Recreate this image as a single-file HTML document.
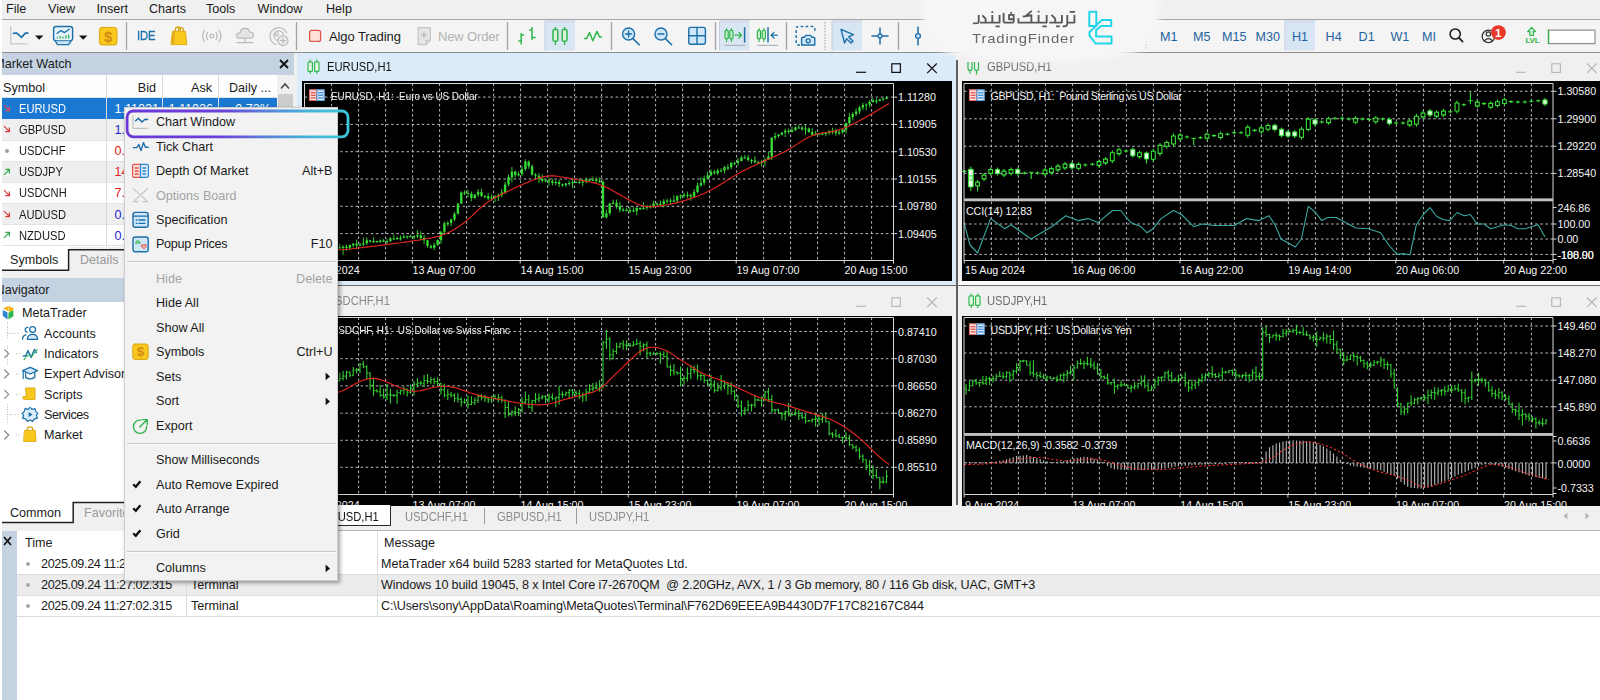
<!DOCTYPE html><html><head><meta charset="utf-8"><title>MetaTrader</title><style>
html,body{margin:0;padding:0;}
body{width:1600px;height:700px;overflow:hidden;background:#f0f0f0;font-family:"Liberation Sans",sans-serif;font-size:12.6px;color:#1a1a1a;position:relative;}
.a{position:absolute;}
.t{position:absolute;white-space:pre;line-height:16px;height:16px;}
.g{color:#a8a8a8;}
.hl{position:absolute;height:1px;}
.vl{position:absolute;width:1px;}
.blk{position:absolute;background:#000;overflow:hidden;}
.ct{position:absolute;white-space:pre;color:#f4f4f4;font-size:10.7px;line-height:12px;height:12px;}
svg{position:absolute;overflow:visible;}
</style></head><body><div class="a" style="left:0px;top:0px;width:1600px;height:19px;background:#f0f0f0;"></div><div class="t" style="left:6px;top:0.5px;">File</div><div class="t" style="left:48px;top:0.5px;">View</div><div class="t" style="left:96.5px;top:0.5px;">Insert</div><div class="t" style="left:149px;top:0.5px;">Charts</div><div class="t" style="left:206px;top:0.5px;">Tools</div><div class="t" style="left:257.5px;top:0.5px;">Window</div><div class="t" style="left:326px;top:0.5px;">Help</div>
<div class="a" style="left:0px;top:20px;width:1600px;height:32px;background:#f4f4f4;"></div><div class="hl" style="left:0px;top:19px;width:1600px;background:#a6a6a6;"></div><div class="hl" style="left:0px;top:52px;width:1600px;background:#8e8e8e;"></div>
<div class="a" style="left:297px;top:53px;width:659px;height:232px;background:#dcebfa;"></div><div class="a" style="left:957px;top:53px;width:643px;height:232px;background:#f0f0f0;"></div><div class="a" style="left:957px;top:281px;width:643px;height:4px;background:#fbfbfb;"></div><div class="a" style="left:297px;top:286px;width:659px;height:219px;background:#f0f0f0;"></div><div class="a" style="left:957px;top:286px;width:643px;height:219px;background:#f0f0f0;"></div><div class="vl" style="left:296px;top:53px;height:452px;background:#f0f0f0;"></div><div class="a" style="left:956px;top:60px;width:1.6px;height:445px;background:#5e5e5e;"></div><div class="hl" style="left:297px;top:285px;width:1303px;background:#6a6a6a;"></div><div class="t" style="left:327px;top:58.5px;color:#111;transform:scaleX(0.89);transform-origin:0 0;">EURUSD,H1</div><div class="t" style="left:986.5px;top:58.5px;color:#6c6c6c;transform:scaleX(0.89);transform-origin:0 0;">GBPUSD,H1</div><div class="t" style="left:327px;top:292.5px;color:#8a8a8a;transform:scaleX(0.89);transform-origin:0 0;">USDCHF,H1</div><div class="t" style="left:986.5px;top:292.5px;color:#6c6c6c;transform:scaleX(0.89);transform-origin:0 0;">USDJPY,H1</div><svg style="left:307px;top:58.5px;opacity:1" width="14" height="16"><path d="M3.2,0.5V15M9.8,0.5V15" stroke="#2fb64c" stroke-width="1.1"/><rect x="1" y="2.8" width="4.4" height="9.6" rx="1" fill="#e2f7e2" stroke="#2fb64c" stroke-width="1.15"/><rect x="7.6" y="2.8" width="4.4" height="9.6" rx="1" fill="#e2f7e2" stroke="#2fb64c" stroke-width="1.15"/></svg><svg style="left:967px;top:61px" width="14" height="14"><path d="M1,1V7.5Q1,9.5 3,9.5Q5,9.5 5,7.5V1M3,9.5V12.5M7.5,1V7.5Q7.5,9.5 9.5,9.5Q11.5,9.5 11.5,7.5V1M9.5,9.5V13.5" stroke="#2fb64c" stroke-width="1.2" fill="none"/></svg><svg style="left:968px;top:292.5px;opacity:1" width="14" height="16"><path d="M3.2,0.5V15M9.8,0.5V15" stroke="#2fb64c" stroke-width="1.1"/><rect x="1" y="2.8" width="4.4" height="9.6" rx="1" fill="#e2f7e2" stroke="#2fb64c" stroke-width="1.15"/><rect x="7.6" y="2.8" width="4.4" height="9.6" rx="1" fill="#e2f7e2" stroke="#2fb64c" stroke-width="1.15"/></svg><svg style="left:0;top:0" width="1600" height="700"><path d="M856,72.3h10" stroke="#151515" stroke-width="1.25"/><rect x="891.8" y="63.8" width="8.6" height="8.6" fill="none" stroke="#151515" stroke-width="1.25"/><path d="M927.2,63.5l9.6,9.6M936.8000000000001,63.5l-9.6,9.6" stroke="#151515" stroke-width="1.25" fill="none"/></svg><svg style="left:0;top:0" width="1600" height="700"><path d="M1516,72.3h10" stroke="#b4b4b4" stroke-width="1.1"/><rect x="1551.8" y="63.8" width="8.6" height="8.6" fill="none" stroke="#b4b4b4" stroke-width="1.1"/><path d="M1587,63.5l9.6,9.6M1596.6,63.5l-9.6,9.6" stroke="#b4b4b4" stroke-width="1.1" fill="none"/></svg><svg style="left:0;top:0" width="1600" height="700"><path d="M856,306.3h10" stroke="#b4b4b4" stroke-width="1.1"/><rect x="891.8" y="297.8" width="8.6" height="8.6" fill="none" stroke="#b4b4b4" stroke-width="1.1"/><path d="M927.2,297.5l9.6,9.6M936.8000000000001,297.5l-9.6,9.6" stroke="#b4b4b4" stroke-width="1.1" fill="none"/></svg><svg style="left:0;top:0" width="1600" height="700"><path d="M1516,306.3h10" stroke="#b4b4b4" stroke-width="1.1"/><rect x="1551.8" y="297.8" width="8.6" height="8.6" fill="none" stroke="#b4b4b4" stroke-width="1.1"/><path d="M1587,297.5l9.6,9.6M1596.6,297.5l-9.6,9.6" stroke="#b4b4b4" stroke-width="1.1" fill="none"/></svg>
<div class="blk" style="left:302px;top:81px;width:650px;height:199.5px;"></div>
<div class="blk" style="left:962px;top:81px;width:638px;height:199.5px;"></div>
<div class="blk" style="left:302px;top:315.5px;width:650px;height:190.5px;"><div class="ct" style="left:3.5px;top:183.5px;">9 Aug 2024</div><div class="ct" style="left:110.5px;top:183.5px;">13 Aug 07:00</div><div class="ct" style="left:218.5px;top:183.5px;">14 Aug 15:00</div><div class="ct" style="left:326.5px;top:183.5px;">15 Aug 23:00</div><div class="ct" style="left:434.5px;top:183.5px;">19 Aug 07:00</div><div class="ct" style="left:542.5px;top:183.5px;">20 Aug 15:00</div><div class="ct" style="left:29px;top:8.0px;transform:scaleX(0.93);transform-origin:0 0;">USDCHF, H1:  US Dollar vs Swiss Franc</div></div>
<div class="blk" style="left:962px;top:315.5px;width:638px;height:190.5px;"><div class="ct" style="left:3.0px;top:183.5px;">9 Aug 2024</div><div class="ct" style="left:110.40000000000009px;top:183.5px;">13 Aug 07:00</div><div class="ct" style="left:218.29999999999995px;top:183.5px;">14 Aug 15:00</div><div class="ct" style="left:326.20000000000005px;top:183.5px;">15 Aug 23:00</div><div class="ct" style="left:434.0999999999999px;top:183.5px;">19 Aug 07:00</div><div class="ct" style="left:542.0px;top:183.5px;">20 Aug 15:00</div></div>
<svg style="left:0;top:0" width="1600" height="700"><defs><clipPath id="ce"><rect x="304" y="83" width="590" height="178"/></clipPath></defs><path d="M331.6,83.5V260.5M358.6,83.5V260.5M385.6,83.5V260.5M412.6,83.5V260.5M439.6,83.5V260.5M466.6,83.5V260.5M493.6,83.5V260.5M520.6,83.5V260.5M547.6,83.5V260.5M574.6,83.5V260.5M601.6,83.5V260.5M628.6,83.5V260.5M655.6,83.5V260.5M682.6,83.5V260.5M709.6,83.5V260.5M736.6,83.5V260.5M763.6,83.5V260.5M790.6,83.5V260.5M817.6,83.5V260.5M844.6,83.5V260.5M871.6,83.5V260.5M304.5,97.1H893.5M304.5,124.4H893.5M304.5,151.7H893.5M304.5,179.0H893.5M304.5,206.3H893.5M304.5,233.6H893.5" stroke="#c2c6ca" stroke-width="1" stroke-dasharray="2.5 2.6" fill="none" opacity="0.95"/><g clip-path="url(#ce)"><path d="M306.0,247.1V251.1M309.4,247.5V250.5M312.8,245.6V252.0M316.1,245.8V249.6M319.5,245.9V249.0M322.9,244.8V249.6M326.2,246.9V249.2M329.6,245.7V248.4M333.0,244.0V248.1M336.4,244.8V249.7M339.8,243.9V248.3M343.1,245.2V255.2M346.5,244.7V250.8M349.9,244.5V249.8M353.2,243.2V247.5M356.6,239.6V249.2M360.0,242.8V245.9M363.4,237.4V246.0M366.8,237.3V244.9M370.1,239.7V242.7M373.5,237.3V242.6M376.9,240.6V242.6M380.2,239.7V242.9M383.6,238.9V242.1M387.0,238.8V243.8M390.4,237.0V242.2M393.8,234.4V239.7M397.1,236.5V239.7M400.5,235.6V240.6M403.9,234.6V238.2M407.2,235.7V238.5M410.6,234.8V237.1M414.0,235.4V239.4M417.4,230.0V238.2M420.8,231.2V240.2M424.1,235.1V244.2M427.5,239.8V247.7M430.9,244.4V248.7M434.2,242.7V250.1M437.6,239.3V245.8M441.0,231.2V243.7M444.4,221.6V234.6M447.8,221.2V226.4M451.1,218.7V226.0M454.5,212.1V221.0M457.9,203.1V214.4M461.2,191.4V204.2M464.6,190.3V195.2M468.0,189.8V197.3M471.4,191.6V201.1M474.8,194.1V198.9M478.1,189.1V196.9M481.5,188.9V196.9M484.9,195.2V198.3M488.2,193.2V200.0M491.6,194.2V200.8M495.0,195.1V201.9M498.4,193.2V201.1M501.8,189.0V197.4M505.1,181.6V194.1M508.5,174.4V186.2M511.9,166.9V182.4M515.2,170.7V177.6M518.6,171.7V176.7M522.0,165.7V176.0M525.4,159.3V170.8M528.8,160.4V168.9M532.1,164.5V175.6M535.5,173.1V179.0M538.9,173.2V183.0M542.2,174.4V182.6M545.6,179.2V182.3M549.0,178.4V185.8M552.4,178.8V185.3M555.8,180.1V185.3M559.1,179.8V187.1M562.5,183.6V186.7M565.9,182.9V186.9M569.2,180.8V185.6M572.6,178.6V188.1M576.0,181.0V182.6M579.4,178.4V183.8M582.8,179.5V186.3M586.1,177.7V183.3M589.5,178.5V181.3M592.9,176.5V181.1M596.2,177.5V183.4M599.6,177.5V183.1M603.0,180.3V217.9M606.4,209.7V218.3M609.8,202.8V215.4M613.1,199.6V204.2M616.5,199.5V208.8M619.9,201.8V212.4M623.2,207.7V211.7M626.6,207.7V211.5M630.0,207.0V213.3M633.4,207.2V212.3M636.8,207.0V215.3M640.1,207.3V210.1M643.5,202.2V209.4M646.9,205.4V210.2M650.2,204.7V208.5M653.6,200.7V208.0M657.0,202.5V205.2M660.4,200.4V206.5M663.8,199.1V207.5M667.1,198.6V203.7M670.5,198.4V204.3M673.9,195.2V201.9M677.2,195.4V203.3M680.6,194.5V199.5M684.0,192.9V197.8M687.4,191.5V198.2M690.8,193.7V200.8M694.1,189.1V197.4M697.5,182.7V193.0M700.9,177.3V186.7M704.2,175.5V185.4M707.6,171.7V179.4M711.0,169.4V176.1M714.4,170.0V174.4M717.8,168.7V175.2M721.1,168.1V172.3M724.5,165.8V173.4M727.9,164.4V170.3M731.2,162.0V169.1M734.6,161.7V165.2M738.0,158.0V165.5M741.4,155.7V161.5M744.8,154.9V158.4M748.1,154.9V161.6M751.5,158.8V163.7M754.9,156.3V163.3M758.2,160.9V163.8M761.6,159.8V166.7M765.0,157.5V166.4M768.4,151.9V160.1M771.8,137.1V160.1M775.1,132.6V140.3M778.5,134.0V137.5M781.9,132.0V135.4M785.2,128.5V137.0M788.6,128.5V133.9M792.0,126.8V132.4M795.4,126.3V131.0M798.8,124.7V128.8M802.1,126.2V130.7M805.5,124.8V134.8M808.9,127.5V132.7M812.2,128.2V136.0M815.6,130.9V135.7M819.0,132.9V134.3M822.4,132.4V135.3M825.8,132.1V136.3M829.1,130.0V135.1M832.5,127.8V134.2M835.9,128.8V135.7M839.2,129.9V134.9M842.6,128.8V134.1M846.0,122.6V133.6M849.4,113.0V125.9M852.8,112.3V120.5M856.1,108.5V116.0M859.5,105.9V113.9M862.9,102.9V110.2M866.2,103.4V110.3M869.6,100.0V107.3M873.0,98.3V102.8M876.4,98.3V103.7M879.8,98.6V101.3M883.1,97.8V101.3M886.5,96.1V99.2" stroke="#38e038" stroke-width="1" fill="none" opacity="0.9"/><path d="M304.8,249.5h2.4v1.2h-2.4zM308.2,249.0h2.4v1.2h-2.4zM311.6,248.4h2.4v1.2h-2.4zM314.9,246.5h2.4v1.9h-2.4zM318.3,246.5h2.4v1.5h-2.4zM321.7,248.0h2.4v1.2h-2.4zM325.1,247.5h2.4v1.2h-2.4zM328.4,247.3h2.4v1.2h-2.4zM331.8,246.6h2.4v1.2h-2.4zM335.2,246.6h2.4v1.2h-2.4zM338.6,247.2h2.4v1.2h-2.4zM341.9,246.8h2.4v1.2h-2.4zM345.3,246.8h2.4v1.2h-2.4zM348.7,245.1h2.4v2.7h-2.4zM352.1,243.8h2.4v1.4h-2.4zM355.4,243.8h2.4v1.7h-2.4zM358.8,244.6h2.4v1.2h-2.4zM362.2,243.3h2.4v1.3h-2.4zM365.6,240.2h2.4v3.0h-2.4zM368.9,240.2h2.4v1.2h-2.4zM372.3,241.0h2.4v1.2h-2.4zM375.7,241.0h2.4v1.2h-2.4zM379.1,240.5h2.4v1.2h-2.4zM382.4,240.5h2.4v1.2h-2.4zM385.8,241.1h2.4v1.2h-2.4zM389.2,238.6h2.4v2.5h-2.4zM392.6,238.4h2.4v1.2h-2.4zM395.9,238.0h2.4v1.2h-2.4zM399.3,237.7h2.4v1.2h-2.4zM402.7,236.4h2.4v1.4h-2.4zM406.1,236.3h2.4v1.2h-2.4zM409.4,236.0h2.4v1.2h-2.4zM412.8,236.0h2.4v1.2h-2.4zM416.2,235.2h2.4v1.2h-2.4zM419.6,235.2h2.4v2.8h-2.4zM422.9,238.0h2.4v2.2h-2.4zM426.3,240.2h2.4v5.8h-2.4zM429.7,246.0h2.4v1.8h-2.4zM433.1,245.1h2.4v2.7h-2.4zM436.4,240.1h2.4v5.0h-2.4zM439.8,231.8h2.4v8.4h-2.4zM443.2,223.2h2.4v8.6h-2.4zM446.6,223.0h2.4v1.2h-2.4zM449.9,219.5h2.4v3.6h-2.4zM453.3,213.7h2.4v5.8h-2.4zM456.7,203.6h2.4v10.1h-2.4zM460.1,192.5h2.4v11.1h-2.4zM463.4,192.5h2.4v1.2h-2.4zM466.8,192.9h2.4v1.2h-2.4zM470.2,193.7h2.4v4.4h-2.4zM473.6,194.8h2.4v3.3h-2.4zM476.9,192.1h2.4v2.7h-2.4zM480.3,192.1h2.4v4.0h-2.4zM483.7,195.9h2.4v1.2h-2.4zM487.1,195.9h2.4v2.6h-2.4zM490.4,197.3h2.4v1.2h-2.4zM493.8,196.7h2.4v1.2h-2.4zM497.2,195.3h2.4v1.5h-2.4zM500.6,192.5h2.4v2.8h-2.4zM503.9,184.5h2.4v8.0h-2.4zM507.3,177.1h2.4v7.3h-2.4zM510.7,171.4h2.4v5.8h-2.4zM514.0,171.4h2.4v3.8h-2.4zM517.4,174.0h2.4v1.2h-2.4zM520.8,169.0h2.4v4.9h-2.4zM524.2,161.5h2.4v7.5h-2.4zM527.5,161.5h2.4v4.8h-2.4zM530.9,166.3h2.4v8.2h-2.4zM534.3,174.5h2.4v1.3h-2.4zM537.7,175.7h2.4v3.0h-2.4zM541.0,178.8h2.4v2.0h-2.4zM544.4,180.3h2.4v1.2h-2.4zM547.8,180.3h2.4v1.2h-2.4zM551.2,181.2h2.4v1.9h-2.4zM554.5,182.0h2.4v1.2h-2.4zM557.9,182.0h2.4v2.1h-2.4zM561.3,184.2h2.4v1.2h-2.4zM564.7,183.5h2.4v1.5h-2.4zM568.0,182.9h2.4v1.2h-2.4zM571.4,182.0h2.4v1.2h-2.4zM574.8,181.9h2.4v1.2h-2.4zM578.2,181.9h2.4v1.2h-2.4zM581.5,181.2h2.4v1.3h-2.4zM584.9,179.6h2.4v1.7h-2.4zM588.3,179.6h2.4v1.2h-2.4zM591.7,179.6h2.4v1.2h-2.4zM595.0,179.9h2.4v1.2h-2.4zM598.4,180.8h2.4v1.2h-2.4zM601.8,181.9h2.4v35.4h-2.4zM605.2,213.2h2.4v4.2h-2.4zM608.5,203.4h2.4v9.8h-2.4zM611.9,202.7h2.4v1.2h-2.4zM615.3,202.7h2.4v3.4h-2.4zM618.7,206.2h2.4v3.5h-2.4zM622.0,209.6h2.4v1.2h-2.4zM625.4,209.7h2.4v1.2h-2.4zM628.8,210.0h2.4v1.2h-2.4zM632.2,210.4h2.4v1.2h-2.4zM635.5,208.0h2.4v3.2h-2.4zM638.9,208.0h2.4v1.2h-2.4zM642.3,208.1h2.4v1.2h-2.4zM645.7,206.3h2.4v1.8h-2.4zM649.0,206.3h2.4v1.2h-2.4zM652.4,203.4h2.4v3.2h-2.4zM655.8,203.4h2.4v1.3h-2.4zM659.2,204.1h2.4v1.2h-2.4zM662.5,201.3h2.4v2.8h-2.4zM665.9,200.4h2.4v1.2h-2.4zM669.3,200.4h2.4v1.2h-2.4zM672.7,200.5h2.4v1.2h-2.4zM676.0,196.3h2.4v4.2h-2.4zM679.4,195.3h2.4v1.2h-2.4zM682.8,194.7h2.4v1.2h-2.4zM686.2,194.7h2.4v1.2h-2.4zM689.5,195.1h2.4v1.5h-2.4zM692.9,192.1h2.4v4.6h-2.4zM696.3,185.4h2.4v6.6h-2.4zM699.7,182.9h2.4v2.6h-2.4zM703.0,178.8h2.4v4.0h-2.4zM706.4,175.2h2.4v3.6h-2.4zM709.8,171.8h2.4v3.4h-2.4zM713.2,171.8h2.4v1.5h-2.4zM716.5,170.6h2.4v2.7h-2.4zM719.9,170.4h2.4v1.2h-2.4zM723.3,167.2h2.4v3.2h-2.4zM726.7,167.2h2.4v1.2h-2.4zM730.0,162.9h2.4v4.4h-2.4zM733.4,162.9h2.4v1.2h-2.4zM736.8,161.0h2.4v2.1h-2.4zM740.2,157.6h2.4v3.4h-2.4zM743.5,157.4h2.4v1.2h-2.4zM746.9,157.4h2.4v2.6h-2.4zM750.3,160.0h2.4v1.2h-2.4zM753.7,160.6h2.4v1.6h-2.4zM757.0,162.2h2.4v1.2h-2.4zM760.4,161.8h2.4v1.2h-2.4zM763.8,159.7h2.4v2.1h-2.4zM767.2,156.5h2.4v3.2h-2.4zM770.5,137.8h2.4v18.7h-2.4zM773.9,136.1h2.4v1.6h-2.4zM777.3,134.6h2.4v1.5h-2.4zM780.7,132.6h2.4v2.1h-2.4zM784.0,130.7h2.4v1.9h-2.4zM787.4,130.7h2.4v1.2h-2.4zM790.8,130.2h2.4v1.7h-2.4zM794.2,127.6h2.4v2.6h-2.4zM797.5,127.4h2.4v1.2h-2.4zM800.9,127.4h2.4v1.9h-2.4zM804.3,128.5h2.4v1.2h-2.4zM807.7,128.5h2.4v3.5h-2.4zM811.0,131.9h2.4v2.9h-2.4zM814.4,133.7h2.4v1.2h-2.4zM817.8,133.5h2.4v1.2h-2.4zM821.2,133.5h2.4v1.2h-2.4zM824.5,132.7h2.4v1.2h-2.4zM827.9,131.6h2.4v1.2h-2.4zM831.3,131.0h2.4v1.2h-2.4zM834.7,131.0h2.4v2.1h-2.4zM838.0,132.2h2.4v1.2h-2.4zM841.4,129.7h2.4v2.5h-2.4zM844.8,123.1h2.4v6.6h-2.4zM848.2,116.9h2.4v6.2h-2.4zM851.5,113.9h2.4v3.1h-2.4zM854.9,111.6h2.4v2.3h-2.4zM858.3,107.6h2.4v4.0h-2.4zM861.7,105.1h2.4v2.5h-2.4zM865.0,104.4h2.4v1.2h-2.4zM868.4,102.0h2.4v2.4h-2.4zM871.8,100.6h2.4v1.3h-2.4zM875.2,100.6h2.4v1.2h-2.4zM878.5,99.4h2.4v1.5h-2.4zM881.9,98.4h2.4v1.2h-2.4zM885.3,97.7h2.4v1.2h-2.4z" fill="#38e038" opacity="0.95"/><path d="M304.0,251.0 L306.0,250.9 L308.0,250.9 L310.0,250.8 L312.0,250.8 L314.0,250.7 L316.0,250.7 L318.0,250.6 L320.0,250.6 L322.0,250.5 L324.0,250.5 L326.0,250.4 L328.0,250.4 L330.0,250.3 L332.0,250.2 L334.0,250.2 L336.0,250.1 L338.0,250.0 L340.0,249.8 L342.0,249.7 L344.0,249.5 L346.0,249.4 L348.0,249.2 L350.0,249.0 L352.0,248.7 L354.0,248.5 L356.0,248.3 L358.0,248.0 L360.0,247.8 L362.0,247.6 L364.0,247.3 L366.0,247.1 L368.0,246.9 L370.0,246.7 L372.0,246.4 L374.0,246.2 L376.0,245.9 L378.0,245.7 L380.0,245.4 L382.0,245.2 L384.0,244.9 L386.0,244.7 L388.0,244.4 L390.0,244.1 L392.0,243.8 L394.0,243.6 L396.0,243.3 L398.0,243.0 L400.0,242.8 L402.0,242.5 L404.0,242.2 L406.0,241.9 L408.0,241.7 L410.0,241.4 L412.0,241.1 L414.0,240.8 L416.0,240.5 L418.0,240.2 L420.0,239.9 L422.0,239.5 L424.0,239.2 L426.0,238.8 L428.0,238.5 L430.0,238.1 L432.0,237.8 L434.0,237.4 L436.0,236.9 L438.0,236.4 L440.0,235.8 L442.0,235.1 L444.0,234.4 L446.0,233.6 L448.0,232.7 L450.0,231.7 L452.0,230.7 L454.0,229.5 L456.0,228.3 L458.0,227.0 L460.0,225.6 L462.0,224.2 L464.0,222.7 L466.0,221.1 L468.0,219.4 L470.0,217.7 L472.0,215.9 L474.0,214.0 L476.0,212.0 L478.0,210.1 L480.0,208.3 L482.0,206.6 L484.0,205.0 L486.0,203.4 L488.0,202.0 L490.0,200.6 L492.0,199.4 L494.0,198.2 L496.0,197.1 L498.0,196.1 L500.0,195.1 L502.0,194.1 L504.0,193.1 L506.0,192.2 L508.0,191.2 L510.0,190.2 L512.0,189.3 L514.0,188.3 L516.0,187.4 L518.0,186.5 L520.0,185.6 L522.0,184.7 L524.0,183.8 L526.0,183.0 L528.0,182.2 L530.0,181.3 L532.0,180.6 L534.0,179.8 L536.0,179.0 L538.0,178.3 L540.0,177.6 L542.0,177.1 L544.0,176.6 L546.0,176.3 L548.0,176.1 L550.0,175.9 L552.0,175.9 L554.0,175.9 L556.0,176.1 L558.0,176.3 L560.0,176.7 L562.0,177.0 L564.0,177.4 L566.0,177.7 L568.0,178.0 L570.0,178.4 L572.0,178.7 L574.0,179.1 L576.0,179.5 L578.0,179.8 L580.0,180.2 L582.0,180.5 L584.0,180.9 L586.0,181.3 L588.0,181.6 L590.0,182.0 L592.0,182.4 L594.0,182.9 L596.0,183.4 L598.0,184.0 L600.0,184.7 L602.0,185.4 L604.0,186.3 L606.0,187.2 L608.0,188.1 L610.0,189.2 L612.0,190.3 L614.0,191.4 L616.0,192.5 L618.0,193.7 L620.0,194.8 L622.0,195.9 L624.0,197.1 L626.0,198.2 L628.0,199.3 L630.0,200.5 L632.0,201.6 L634.0,202.6 L636.0,203.6 L638.0,204.4 L640.0,205.0 L642.0,205.6 L644.0,206.1 L646.0,206.4 L648.0,206.6 L650.0,206.7 L652.0,206.6 L654.0,206.5 L656.0,206.3 L658.0,206.1 L660.0,205.9 L662.0,205.6 L664.0,205.3 L666.0,205.0 L668.0,204.7 L670.0,204.3 L672.0,203.9 L674.0,203.4 L676.0,202.9 L678.0,202.4 L680.0,201.9 L682.0,201.3 L684.0,200.7 L686.0,200.1 L688.0,199.4 L690.0,198.8 L692.0,198.1 L694.0,197.4 L696.0,196.7 L698.0,196.0 L700.0,195.2 L702.0,194.3 L704.0,193.5 L706.0,192.5 L708.0,191.6 L710.0,190.5 L712.0,189.5 L714.0,188.4 L716.0,187.2 L718.0,186.0 L720.0,184.7 L722.0,183.5 L724.0,182.2 L726.0,180.9 L728.0,179.7 L730.0,178.5 L732.0,177.3 L734.0,176.1 L736.0,174.9 L738.0,173.8 L740.0,172.7 L742.0,171.6 L744.0,170.5 L746.0,169.5 L748.0,168.5 L750.0,167.6 L752.0,166.6 L754.0,165.7 L756.0,164.7 L758.0,163.8 L760.0,162.9 L762.0,162.0 L764.0,161.1 L766.0,160.2 L768.0,159.3 L770.0,158.5 L772.0,157.6 L774.0,156.7 L776.0,155.8 L778.0,154.9 L780.0,154.0 L782.0,153.0 L784.0,152.0 L786.0,150.9 L788.0,149.8 L790.0,148.6 L792.0,147.4 L794.0,146.2 L796.0,144.9 L798.0,143.6 L800.0,142.2 L802.0,140.9 L804.0,139.7 L806.0,138.6 L808.0,137.5 L810.0,136.6 L812.0,135.8 L814.0,135.0 L816.0,134.4 L818.0,133.8 L820.0,133.4 L822.0,133.0 L824.0,132.7 L826.0,132.5 L828.0,132.2 L830.0,131.9 L832.0,131.6 L834.0,131.1 L836.0,130.7 L838.0,130.1 L840.0,129.5 L842.0,128.8 L844.0,128.1 L846.0,127.3 L848.0,126.4 L850.0,125.5 L852.0,124.5 L854.0,123.5 L856.0,122.5 L858.0,121.5 L860.0,120.4 L862.0,119.3 L864.0,118.2 L866.0,117.1 L868.0,116.0 L870.0,114.8 L872.0,113.7 L874.0,112.5 L876.0,111.3 L878.0,110.0 L880.0,108.9 L882.0,107.7 L884.0,106.5 L886.0,105.3 L888.0,104.2 L889.0,103.5" stroke="#e8281e" stroke-width="1.1" fill="none" opacity="1" stroke-linejoin="round"/></g><path d="M304.5,260.5V83.5H893.5V263.5M304.5,260.5H893.5" stroke="#d8d8d8" stroke-width="1" fill="none"/><path d="M893.5,97.1h3.5M893.5,124.4h3.5M893.5,151.7h3.5M893.5,179h3.5M893.5,206.3h3.5M893.5,233.6h3.5M304.2,260.5v3M412.2,260.5v3M520.2,260.5v3M628.2,260.5v3M736.2,260.5v3M844.2,260.5v3" stroke="#d8d8d8" stroke-width="1" fill="none"/><g transform="translate(309,89.5)"><rect x="0" y="0" width="15.5" height="11.5" fill="#fff"/><rect x="0.4" y="0.4" width="7.2" height="10.7" fill="#fbe3e0" stroke="#e0524a" stroke-width="0.9"/><rect x="7.9" y="0.4" width="7.2" height="10.7" fill="#dcecfa" stroke="#3d8fd6" stroke-width="0.9"/><path d="M1.6,3.2H6.6" stroke="#e0524a" stroke-width="1.3"/><path d="M9,3.2H14" stroke="#3d8fd6" stroke-width="1.3"/><path d="M1.6,5.8H6.6" stroke="#e0524a" stroke-width="1.3"/><path d="M9,5.8H14" stroke="#3d8fd6" stroke-width="1.3"/><path d="M1.6,8.4H6.6" stroke="#e0524a" stroke-width="1.3"/><path d="M9,8.4H14" stroke="#3d8fd6" stroke-width="1.3"/></g></svg><div class="ct" style="left:898px;top:91.1px;">1.11280</div><div class="ct" style="left:898px;top:118.4px;">1.10905</div><div class="ct" style="left:898px;top:145.7px;">1.10530</div><div class="ct" style="left:898px;top:173px;">1.10155</div><div class="ct" style="left:898px;top:200.3px;">1.09780</div><div class="ct" style="left:898px;top:227.6px;">1.09405</div><div class="ct" style="left:305.5px;top:264px;">9 Aug 2024</div><div class="ct" style="left:412.5px;top:264px;">13 Aug 07:00</div><div class="ct" style="left:520.5px;top:264px;">14 Aug 15:00</div><div class="ct" style="left:628.5px;top:264px;">15 Aug 23:00</div><div class="ct" style="left:736.5px;top:264px;">19 Aug 07:00</div><div class="ct" style="left:844.5px;top:264px;">20 Aug 15:00</div><div class="ct" style="left:331px;top:89.5px;transform:scaleX(0.925);transform-origin:0 0;">EURUSD, H1:  Euro vs US Dollar</div>
<svg style="left:0;top:0" width="1600" height="700"><path d="M991.4,83.5V198.8M1018.4,83.5V198.8M1045.4,83.5V198.8M1072.4,83.5V198.8M1099.4,83.5V198.8M1126.4,83.5V198.8M1153.4,83.5V198.8M1180.4,83.5V198.8M1207.4,83.5V198.8M1234.4,83.5V198.8M1261.4,83.5V198.8M1288.4,83.5V198.8M1315.4,83.5V198.8M1342.4,83.5V198.8M1369.4,83.5V198.8M1396.4,83.5V198.8M1423.4,83.5V198.8M1450.4,83.5V198.8M1477.4,83.5V198.8M1504.4,83.5V198.8M1531.4,83.5V198.8M964,91.3H1553M964,118.8H1553M964,146.2H1553M964,173.4H1553" stroke="#c2c6ca" stroke-width="1" stroke-dasharray="2.5 2.6" fill="none" opacity="0.95"/><path d="M991.4,201.6V260.5M1018.4,201.6V260.5M1045.4,201.6V260.5M1072.4,201.6V260.5M1099.4,201.6V260.5M1126.4,201.6V260.5M1153.4,201.6V260.5M1180.4,201.6V260.5M1207.4,201.6V260.5M1234.4,201.6V260.5M1261.4,201.6V260.5M1288.4,201.6V260.5M1315.4,201.6V260.5M1342.4,201.6V260.5M1369.4,201.6V260.5M1396.4,201.6V260.5M1423.4,201.6V260.5M1450.4,201.6V260.5M1477.4,201.6V260.5M1504.4,201.6V260.5M1531.4,201.6V260.5M964,224.0H1553M964,239.0H1553M964,254.4H1553" stroke="#c2c6ca" stroke-width="1" stroke-dasharray="2.5 2.6" fill="none" opacity="0.95"/><path d="M962.2,171.4h4.4M964.4,170.0v2.8M970.8,174.0v8M977.6,180.0v8M984.0,173.0v8M990.7,167.5v8M997.5,167.5v8M1004.0,169.0v8M1011.0,167.5v8M1017.7,167.5v8M1022.2,173.0h4.4M1024.4,171.6v2.8M1028.8,172.3h4.8M1031.2,172.3v6.8M1035.4,173.0h4.4M1037.6,171.6v2.8M1045.0,168.0v8M1051.4,166.5v8M1058.0,164.0v8M1065.0,162.0v8M1072.0,161.8v8M1078.6,162.3v8M1083.1,165.0h4.4M1085.3,163.6v2.8M1090.2,164.3h4.4M1092.4,162.9v2.8M1099.0,159.5v8M1105.5,157.0v8M1112.3,150.2v13M1119.0,147.7v8M1123.8,151.0h4.4M1126.0,149.6v2.8M1132.8,147.6v10M1139.5,150.7v8M1146.5,151.5v12M1153.3,148.8v13M1160.0,142.9v13M1166.7,140.4v8M1173.5,133.5v13M1180.2,133.0v8M1184.8,137.0h4.4M1187.0,135.6v2.8M1191.3,138.2h4.8M1193.7,138.2v6.8M1198.2,137.7h4.4M1200.4,136.3v2.8M1207.0,132.2v8M1211.8,135.6h4.4M1214.0,134.2v2.8M1220.6,131.6v8M1225.2,134.2h4.4M1227.4,132.8v2.8M1231.8,132.7h4.4M1234.0,131.3v2.8M1238.8,132.7h4.4M1241.0,131.3v2.8M1247.8,124.7v13M1252.4,130.4h4.4M1254.6,129.0v2.8M1261.3,125.8v8M1268.0,123.4v8M1274.8,123.4v8M1281.5,127.5v10M1288.0,130.0v8M1294.7,130.0v8M1301.5,126.8v13M1308.3,117.3v14M1315.0,118.0v8M1319.5,122.0h4.4M1321.7,120.6v2.8M1328.5,116.7v8M1332.8,118.3h4.4M1335.0,116.9v2.8M1339.8,118.3h4.4M1342.0,116.9v2.8M1346.8,119.0h4.4M1349.0,117.6v2.8M1355.5,116.3v8M1360.1,119.0h4.4M1362.3,117.6v2.8M1366.8,119.5h4.4M1369.0,118.1v2.8M1375.8,115.9v8M1380.4,119.0h4.4M1382.6,117.6v2.8M1389.4,117.5v8M1393.8,123.0h4.4M1396.0,121.6v2.8M1400.8,123.0h4.4M1403.0,121.6v2.8M1409.7,119.0v8M1416.4,113.8v13M1423.0,111.0v8M1430.0,109.0v8M1436.6,110.2v8M1443.5,109.0v8M1448.1,111.8h4.4M1450.3,110.4v2.8M1457.0,100.5v13M1461.6,104.8h4.4M1463.8,103.4v2.8M1468.0,100.8h4.8M1470.4,92.3v12M1477.3,100.0v8M1481.8,103.6h4.4M1484.0,102.2v2.8M1490.7,101.3v8M1497.5,99.6v8M1504.4,97.6v8M1508.8,101.6h4.4M1511.0,100.2v2.8M1515.6,102.0h4.4M1517.8,100.6v2.8M1522.6,102.0h4.4M1524.8,100.6v2.8M1529.1,101.2h4.4M1531.3,99.8v2.8M1536.0,100.8h4.4M1538.2,99.4v2.8M1545.0,98.0v8M970.8,166.5v24.5M977.6,181v10.5" stroke="#38e038" stroke-width="1.1" fill="none"/><path d="M975.7,182.1h3.8v3.8h-3.8zM982.1,175.1h3.8v3.8h-3.8zM988.8,169.6h3.8v3.8h-3.8zM1002.1,171.1h3.8v3.8h-3.8zM1009.1,169.6h3.8v3.8h-3.8zM1043.1,170.1h3.8v3.8h-3.8zM1049.5,168.6h3.8v3.8h-3.8zM1056.1,166.1h3.8v3.8h-3.8zM1063.1,164.1h3.8v3.8h-3.8zM1076.7,164.4h3.8v3.8h-3.8zM1097.1,161.6h3.8v3.8h-3.8zM1103.6,159.1h3.8v3.8h-3.8zM1110.4,152.7h3.8v8h-3.8zM1117.1,149.8h3.8v3.8h-3.8zM1137.6,152.8h3.8v3.8h-3.8zM1151.4,151.3h3.8v8h-3.8zM1158.1,145.4h3.8v8h-3.8zM1164.8,142.5h3.8v3.8h-3.8zM1171.6,136.0h3.8v8h-3.8zM1178.3,135.1h3.8v3.8h-3.8zM1205.1,134.3h3.8v3.8h-3.8zM1218.7,133.7h3.8v3.8h-3.8zM1245.9,127.2h3.8v8h-3.8zM1259.4,127.9h3.8v3.8h-3.8zM1266.1,125.5h3.8v3.8h-3.8zM1299.6,129.3h3.8v8h-3.8zM1306.4,119.1h3.8v10.4h-3.8zM1326.6,118.8h3.8v3.8h-3.8zM1353.6,118.4h3.8v3.8h-3.8zM1373.9,118.0h3.8v3.8h-3.8zM1407.8,121.1h3.8v3.8h-3.8zM1414.5,116.3h3.8v8h-3.8zM1421.1,113.1h3.8v3.8h-3.8zM1434.7,112.3h3.8v3.8h-3.8zM1441.6,111.1h3.8v3.8h-3.8zM1455.1,103.0h3.8v8h-3.8zM1475.4,102.1h3.8v3.8h-3.8zM1488.8,103.4h3.8v3.8h-3.8zM1495.6,101.7h3.8v3.8h-3.8zM1502.5,99.7h3.8v3.8h-3.8z" stroke="#38e038" stroke-width="1.1" fill="#000"/><path d="M968.7,175.9h4.2v4.2h-4.2zM995.4,169.4h4.2v4.2h-4.2zM1015.6,169.4h4.2v4.2h-4.2zM1069.9,163.7h4.2v4.2h-4.2zM1130.7,149.4h4.2v6.4h-4.2zM1144.4,153.0h4.2v6h-4.2zM1272.7,125.3h4.2v4.2h-4.2zM1279.4,129.3h4.2v6.4h-4.2zM1285.9,131.9h4.2v4.2h-4.2zM1292.6,131.9h4.2v4.2h-4.2zM1312.9,119.9h4.2v4.2h-4.2zM1387.3,119.4h4.2v4.2h-4.2zM1427.9,110.9h4.2v4.2h-4.2zM1542.9,99.9h4.2v4.2h-4.2zM968.4,169.3h4.8v17.6h-4.8z" stroke="#38e038" stroke-width="1" fill="#eaffea"/><path d="M964.0,222.6 L970.0,245.0 L977.6,253.0 L990.6,218.6 L1004.8,228.7 L1011.0,224.7 L1031.0,239.0 L1051.6,226.7 L1065.8,215.7 L1078.0,220.6 L1088.0,218.6 L1098.0,222.6 L1112.5,210.5 L1120.6,210.5 L1130.8,222.6 L1141.0,226.7 L1147.0,232.8 L1153.0,228.7 L1161.0,218.6 L1173.4,210.5 L1181.5,214.5 L1193.7,226.7 L1202.0,224.0 L1214.0,225.5 L1234.4,225.5 L1246.6,218.6 L1258.7,220.6 L1269.0,215.7 L1275.0,224.7 L1281.0,239.0 L1295.3,247.0 L1301.4,239.0 L1308.3,206.4 L1315.6,212.5 L1321.7,220.6 L1328.0,217.5 L1336.0,217.5 L1356.0,228.0 L1368.4,228.7 L1380.6,232.8 L1388.8,245.0 L1397.0,254.4 L1403.0,253.6 L1410.0,254.8 L1416.4,224.7 L1423.3,214.5 L1430.0,207.6 L1436.7,216.5 L1443.0,219.5 L1449.7,220.6 L1457.0,212.5 L1464.0,215.7 L1470.4,214.5 L1477.0,223.9 L1484.0,224.0 L1490.7,228.7 L1504.5,224.7 L1511.0,225.5 L1518.0,228.7 L1525.0,228.7 L1538.0,224.7 L1545.0,236.9" stroke="#3aa8a0" stroke-width="1.1" fill="none" opacity="1" stroke-linejoin="round"/><path d="M964,198.8V83.5H1553V263.5M964,260.5V201.6M964,260.5H1553" stroke="#d8d8d8" stroke-width="1" fill="none"/><rect x="963.5" y="198.4" width="589.5" height="2.9" fill="#c0c0c0"/><path d="M1553,91.3h3.5M1553,118.8h3.5M1553,146.2h3.5M1553,173.4h3.5M1553,207.5h3.5M1553,224h3.5M1553,239h3.5M1553,254.4h3.5M1553,259.5h3.5M964.2,260.5v3M1072.1,260.5v3M1180.0,260.5v3M1287.9,260.5v3M1395.8,260.5v3M1503.7,260.5v3" stroke="#d8d8d8" stroke-width="1" fill="none"/><g transform="translate(969,89.5)"><rect x="0" y="0" width="15.5" height="11.5" fill="#fff"/><rect x="0.4" y="0.4" width="7.2" height="10.7" fill="#fbe3e0" stroke="#e0524a" stroke-width="0.9"/><rect x="7.9" y="0.4" width="7.2" height="10.7" fill="#dcecfa" stroke="#3d8fd6" stroke-width="0.9"/><path d="M1.6,3.2H6.6" stroke="#e0524a" stroke-width="1.3"/><path d="M9,3.2H14" stroke="#3d8fd6" stroke-width="1.3"/><path d="M1.6,5.8H6.6" stroke="#e0524a" stroke-width="1.3"/><path d="M9,5.8H14" stroke="#3d8fd6" stroke-width="1.3"/><path d="M1.6,8.4H6.6" stroke="#e0524a" stroke-width="1.3"/><path d="M9,8.4H14" stroke="#3d8fd6" stroke-width="1.3"/></g></svg><div class="ct" style="left:1557.5px;top:85.3px;">1.30580</div><div class="ct" style="left:1557.5px;top:112.8px;">1.29900</div><div class="ct" style="left:1557.5px;top:140.2px;">1.29220</div><div class="ct" style="left:1557.5px;top:167.4px;">1.28540</div><div class="ct" style="left:1557.5px;top:201.5px;">246.86</div><div class="ct" style="left:1557.5px;top:218px;">100.00</div><div class="ct" style="left:1557.5px;top:233px;">0.00</div><div class="ct" style="left:1557.5px;top:249px;">-100.00</div><div class="ct" style="left:1557.5px;top:249px;">-188.90</div><div class="ct" style="left:965.0px;top:264px;">15 Aug 2024</div><div class="ct" style="left:1072.4px;top:264px;">16 Aug 06:00</div><div class="ct" style="left:1180.3px;top:264px;">16 Aug 22:00</div><div class="ct" style="left:1288.2px;top:264px;">19 Aug 14:00</div><div class="ct" style="left:1396.1px;top:264px;">20 Aug 06:00</div><div class="ct" style="left:1504.0px;top:264px;">20 Aug 22:00</div><div class="ct" style="left:990.5px;top:89.5px;letter-spacing:-0.38px;">GBPUSD, H1:  Pound Sterling vs US Dollar</div><div class="ct" style="left:966px;top:204.5px;letter-spacing:-0.1px;">CCI(14) 12.83</div>
<svg style="left:0;top:0" width="1600" height="700"><defs><clipPath id="cc"><rect x="304" y="317" width="590" height="178"/></clipPath></defs><path d="M331.6,317.5V494.5M358.6,317.5V494.5M385.6,317.5V494.5M412.6,317.5V494.5M439.6,317.5V494.5M466.6,317.5V494.5M493.6,317.5V494.5M520.6,317.5V494.5M547.6,317.5V494.5M574.6,317.5V494.5M601.6,317.5V494.5M628.6,317.5V494.5M655.6,317.5V494.5M682.6,317.5V494.5M709.6,317.5V494.5M736.6,317.5V494.5M763.6,317.5V494.5M790.6,317.5V494.5M817.6,317.5V494.5M844.6,317.5V494.5M871.6,317.5V494.5M304.5,331.5H893.5M304.5,358.7H893.5M304.5,385.9H893.5M304.5,413.2H893.5M304.5,440.3H893.5M304.5,467.3H893.5" stroke="#c2c6ca" stroke-width="1" stroke-dasharray="2.5 2.6" fill="none" opacity="0.95"/><g clip-path="url(#cc)"><path d="M306.0,383.7V388.3M304.6,386.9h1.4M306.0,385.2h1.4M309.4,379.0V387.7M308.0,385.2h1.4M309.4,383.3h1.4M312.8,379.2V387.4M311.4,383.3h1.4M312.8,381.0h1.4M316.1,379.5V381.6M314.7,381.0h1.4M316.1,380.7h1.4M319.5,378.2V384.7M318.1,380.7h1.4M319.5,379.5h1.4M322.9,378.8V384.7M321.5,379.5h1.4M322.9,380.9h1.4M326.2,377.6V386.0M324.9,380.9h1.4M326.2,379.0h1.4M329.6,371.7V388.1M328.2,379.0h1.4M329.6,381.1h1.4M333.0,379.2V385.0M331.6,381.1h1.4M333.0,379.9h1.4M336.4,377.8V383.5M335.0,379.9h1.4M336.4,380.5h1.4M339.8,372.4V381.8M338.4,380.5h1.4M339.8,378.5h1.4M343.1,370.8V380.6M341.7,378.5h1.4M343.1,376.1h1.4M346.5,370.4V379.4M345.1,376.1h1.4M346.5,372.2h1.4M349.9,371.2V377.2M348.5,372.2h1.4M349.9,375.2h1.4M353.2,367.0V376.3M351.9,375.2h1.4M353.2,370.2h1.4M356.6,367.9V373.6M355.2,370.2h1.4M356.6,369.7h1.4M360.0,363.2V373.1M358.6,369.7h1.4M360.0,364.3h1.4M363.4,361.2V368.0M362.0,364.3h1.4M363.4,366.8h1.4M366.8,365.2V378.9M365.4,366.8h1.4M366.8,373.0h1.4M370.1,372.2V390.1M368.7,373.0h1.4M370.1,385.2h1.4M373.5,377.5V395.8M372.1,385.2h1.4M373.5,390.6h1.4M376.9,389.0V392.4M375.5,390.6h1.4M376.9,391.8h1.4M380.2,384.9V396.8M378.9,391.8h1.4M380.2,395.4h1.4M383.6,388.6V398.6M382.2,395.4h1.4M383.6,397.1h1.4M387.0,383.9V400.1M385.6,397.1h1.4M387.0,394.7h1.4M390.4,388.8V403.5M389.0,394.7h1.4M390.4,395.1h1.4M393.8,394.2V397.1M392.4,395.1h1.4M393.8,395.4h1.4M397.1,389.5V403.7M395.7,395.4h1.4M397.1,392.7h1.4M400.5,389.7V394.7M399.1,392.7h1.4M400.5,390.5h1.4M403.9,386.5V394.8M402.5,390.5h1.4M403.9,389.1h1.4M407.2,388.6V396.4M405.9,389.1h1.4M407.2,392.2h1.4M410.6,384.6V393.8M409.2,392.2h1.4M410.6,388.1h1.4M414.0,380.9V395.5M412.6,388.1h1.4M414.0,384.3h1.4M417.4,378.0V387.6M416.0,384.3h1.4M417.4,383.1h1.4M420.8,381.0V385.6M419.4,383.1h1.4M420.8,383.2h1.4M424.1,375.1V386.9M422.7,383.2h1.4M424.1,380.7h1.4M427.5,373.9V383.9M426.1,380.7h1.4M427.5,381.5h1.4M430.9,376.9V384.2M429.5,381.5h1.4M430.9,379.5h1.4M434.2,377.7V384.4M432.9,379.5h1.4M434.2,381.6h1.4M437.6,377.2V386.1M436.2,381.6h1.4M437.6,383.5h1.4M441.0,382.7V394.6M439.6,383.5h1.4M441.0,389.6h1.4M444.4,383.7V397.4M443.0,389.6h1.4M444.4,395.3h1.4M447.8,389.2V400.1M446.4,395.3h1.4M447.8,394.2h1.4M451.1,392.1V397.6M449.7,394.2h1.4M451.1,395.4h1.4M454.5,393.2V402.2M453.1,395.4h1.4M454.5,398.3h1.4M457.9,393.1V402.5M456.5,398.3h1.4M457.9,399.4h1.4M461.2,397.3V406.6M459.9,399.4h1.4M461.2,402.0h1.4M464.6,398.6V403.7M463.2,402.0h1.4M464.6,402.8h1.4M468.0,396.1V408.7M466.6,402.8h1.4M468.0,404.5h1.4M471.4,396.2V405.0M470.0,404.5h1.4M471.4,402.8h1.4M474.8,397.5V405.1M473.4,402.8h1.4M474.8,400.2h1.4M478.1,394.2V403.1M476.7,400.2h1.4M478.1,396.4h1.4M481.5,394.1V400.6M480.1,396.4h1.4M481.5,397.2h1.4M484.9,395.1V402.1M483.5,397.2h1.4M484.9,397.9h1.4M488.2,397.4V403.1M486.9,397.9h1.4M488.2,399.8h1.4M491.6,395.8V402.9M490.2,399.8h1.4M491.6,396.8h1.4M495.0,394.6V399.3M493.6,396.8h1.4M495.0,398.9h1.4M498.4,394.0V402.5M497.0,398.9h1.4M498.4,397.7h1.4M501.8,395.6V402.8M500.4,397.7h1.4M501.8,400.2h1.4M505.1,399.6V418.1M503.7,400.2h1.4M505.1,407.5h1.4M508.5,400.8V416.6M507.1,407.5h1.4M508.5,414.5h1.4M511.9,410.2V416.5M510.5,414.5h1.4M511.9,411.9h1.4M515.2,406.6V416.3M513.9,411.9h1.4M515.2,412.8h1.4M518.6,408.0V415.9M517.2,412.8h1.4M518.6,409.7h1.4M522.0,397.2V412.7M520.6,409.7h1.4M522.0,402.1h1.4M525.4,391.5V403.7M524.0,402.1h1.4M525.4,399.8h1.4M528.8,394.5V408.2M527.4,399.8h1.4M528.8,407.2h1.4M532.1,399.7V411.7M530.7,407.2h1.4M532.1,400.6h1.4M535.5,393.1V403.6M534.1,400.6h1.4M535.5,399.0h1.4M538.9,393.6V402.3M537.5,399.0h1.4M538.9,397.9h1.4M542.2,395.1V399.5M540.9,397.9h1.4M542.2,396.6h1.4M545.6,395.1V403.2M544.2,396.6h1.4M545.6,399.1h1.4M549.0,393.4V402.6M547.6,399.1h1.4M549.0,397.1h1.4M552.4,393.5V400.5M551.0,397.1h1.4M552.4,398.7h1.4M555.8,396.8V407.3M554.4,398.7h1.4M555.8,397.4h1.4M559.1,386.1V404.5M557.7,397.4h1.4M559.1,394.2h1.4M562.5,391.3V397.7M561.1,394.2h1.4M562.5,394.7h1.4M565.9,391.7V396.0M564.5,394.7h1.4M565.9,392.6h1.4M569.2,388.9V399.0M567.9,392.6h1.4M569.2,390.3h1.4M572.6,389.0V396.6M571.2,390.3h1.4M572.6,392.6h1.4M576.0,390.7V397.2M574.6,392.6h1.4M576.0,393.3h1.4M579.4,389.8V399.1M578.0,393.3h1.4M579.4,396.7h1.4M582.8,392.5V402.0M581.4,396.7h1.4M582.8,395.0h1.4M586.1,388.6V401.3M584.7,395.0h1.4M586.1,392.1h1.4M589.5,384.3V393.5M588.1,392.1h1.4M589.5,389.1h1.4M592.9,383.0V391.6M591.5,389.1h1.4M592.9,387.9h1.4M596.2,382.2V389.3M594.9,387.9h1.4M596.2,388.3h1.4M599.6,380.3V391.4M598.2,388.3h1.4M599.6,387.1h1.4M603.0,340.9V388.3M601.6,387.1h1.4M603.0,342.3h1.4M606.4,330.0V348.9M605.0,342.3h1.4M606.4,339.0h1.4M609.8,337.2V360.4M608.4,339.0h1.4M609.8,354.8h1.4M613.1,348.7V359.5M611.7,354.8h1.4M613.1,351.5h1.4M616.5,342.7V354.2M615.1,351.5h1.4M616.5,346.8h1.4M619.9,342.5V348.1M618.5,346.8h1.4M619.9,343.8h1.4M623.2,340.3V349.5M621.9,343.8h1.4M623.2,345.0h1.4M626.6,340.3V350.1M625.2,345.0h1.4M626.6,345.6h1.4M630.0,342.9V346.7M628.6,345.6h1.4M630.0,345.8h1.4M633.4,341.0V346.6M632.0,345.8h1.4M633.4,344.3h1.4M636.8,338.8V344.9M635.4,344.3h1.4M636.8,343.7h1.4M640.1,340.8V355.6M638.7,343.7h1.4M640.1,346.3h1.4M643.5,343.3V351.2M642.1,346.3h1.4M643.5,344.9h1.4M646.9,341.4V358.0M645.5,344.9h1.4M646.9,353.1h1.4M650.2,351.8V355.9M648.9,353.1h1.4M650.2,354.0h1.4M653.6,351.6V354.7M652.2,354.0h1.4M653.6,353.7h1.4M657.0,352.0V354.9M655.6,353.7h1.4M657.0,353.7h1.4M660.4,351.6V363.7M659.0,353.7h1.4M660.4,354.5h1.4M663.8,351.2V357.5M662.4,354.5h1.4M663.8,356.8h1.4M667.1,351.3V367.5M665.7,356.8h1.4M667.1,366.9h1.4M670.5,364.6V376.3M669.1,366.9h1.4M670.5,370.4h1.4M673.9,364.0V375.5M672.5,370.4h1.4M673.9,372.2h1.4M677.2,371.6V374.8M675.9,372.2h1.4M677.2,373.1h1.4M680.6,366.6V386.6M679.2,373.1h1.4M680.6,378.6h1.4M684.0,375.5V384.6M682.6,378.6h1.4M684.0,378.1h1.4M687.4,367.6V381.4M686.0,378.1h1.4M687.4,373.8h1.4M690.8,365.1V379.1M689.4,373.8h1.4M690.8,369.6h1.4M694.1,365.4V373.6M692.7,369.6h1.4M694.1,371.0h1.4M697.5,364.6V379.8M696.1,371.0h1.4M697.5,375.8h1.4M700.9,372.6V380.9M699.5,375.8h1.4M700.9,375.5h1.4M704.2,373.9V382.9M702.9,375.5h1.4M704.2,380.4h1.4M707.6,379.4V386.3M706.2,380.4h1.4M707.6,384.0h1.4M711.0,375.1V389.6M709.6,384.0h1.4M711.0,384.3h1.4M714.4,380.1V392.7M713.0,384.3h1.4M714.4,390.4h1.4M717.8,382.8V391.5M716.4,390.4h1.4M717.8,387.6h1.4M721.1,375.1V390.7M719.7,387.6h1.4M721.1,381.4h1.4M724.5,380.5V389.3M723.1,381.4h1.4M724.5,384.0h1.4M727.9,381.9V394.8M726.5,384.0h1.4M727.9,385.7h1.4M731.2,382.3V394.7M729.9,385.7h1.4M731.2,391.3h1.4M734.6,389.7V400.7M733.2,391.3h1.4M734.6,396.2h1.4M738.0,395.6V408.1M736.6,396.2h1.4M738.0,406.0h1.4M741.4,400.5V416.6M740.0,406.0h1.4M741.4,410.8h1.4M744.8,407.1V415.0M743.4,410.8h1.4M744.8,410.0h1.4M748.1,400.2V411.5M746.7,410.0h1.4M748.1,405.3h1.4M751.5,403.7V411.5M750.1,405.3h1.4M751.5,405.0h1.4M754.9,394.8V407.4M753.5,405.0h1.4M754.9,399.9h1.4M758.2,398.4V401.0M756.9,399.9h1.4M758.2,400.2h1.4M761.6,396.3V406.5M760.2,400.2h1.4M761.6,397.3h1.4M765.0,390.9V400.9M763.6,397.3h1.4M765.0,391.9h1.4M768.4,387.8V401.7M767.0,391.9h1.4M768.4,399.5h1.4M771.8,394.8V413.4M770.4,399.5h1.4M771.8,409.9h1.4M775.1,409.3V412.6M773.7,409.9h1.4M775.1,409.9h1.4M778.5,408.8V414.1M777.1,409.9h1.4M778.5,413.4h1.4M781.9,412.1V419.7M780.5,413.4h1.4M781.9,413.9h1.4M785.2,410.5V420.5M783.9,413.9h1.4M785.2,411.6h1.4M788.6,402.7V416.5M787.2,411.6h1.4M788.6,414.1h1.4M792.0,411.9V415.8M790.6,414.1h1.4M792.0,414.5h1.4M795.4,408.5V415.7M794.0,414.5h1.4M795.4,413.2h1.4M798.8,409.5V419.9M797.4,413.2h1.4M798.8,415.7h1.4M802.1,411.9V419.0M800.7,415.7h1.4M802.1,417.4h1.4M805.5,414.0V423.6M804.1,417.4h1.4M805.5,421.0h1.4M808.9,420.1V421.9M807.5,421.0h1.4M808.9,420.8h1.4M812.2,418.6V422.6M810.9,420.8h1.4M812.2,419.4h1.4M815.6,413.3V426.4M814.2,419.4h1.4M815.6,418.6h1.4M819.0,414.7V425.8M817.6,418.6h1.4M819.0,419.4h1.4M822.4,413.2V423.1M821.0,419.4h1.4M822.4,417.2h1.4M825.8,413.1V422.5M824.4,417.2h1.4M825.8,421.8h1.4M829.1,421.3V435.6M827.7,421.8h1.4M829.1,433.6h1.4M832.5,432.2V438.0M831.1,433.6h1.4M832.5,435.0h1.4M835.9,429.2V437.4M834.5,435.0h1.4M835.9,436.1h1.4M839.2,433.7V437.9M837.9,436.1h1.4M839.2,437.3h1.4M842.6,436.7V443.6M841.2,437.3h1.4M842.6,437.3h1.4M846.0,432.3V440.1M844.6,437.3h1.4M846.0,438.4h1.4M849.4,434.7V446.3M848.0,438.4h1.4M849.4,444.8h1.4M852.8,444.0V449.2M851.4,444.8h1.4M852.8,447.1h1.4M856.1,445.3V451.8M854.7,447.1h1.4M856.1,450.3h1.4M859.5,447.6V459.2M858.1,450.3h1.4M859.5,456.3h1.4M862.9,454.3V463.0M861.5,456.3h1.4M862.9,459.8h1.4M866.2,459.3V470.1M864.9,459.8h1.4M866.2,465.8h1.4M869.6,460.2V475.8M868.2,465.8h1.4M869.6,470.6h1.4M873.0,465.3V479.3M871.6,470.6h1.4M873.0,475.5h1.4M876.4,468.9V478.3M875.0,475.5h1.4M876.4,477.8h1.4M879.8,476.5V489.2M878.4,477.8h1.4M879.8,481.9h1.4M883.1,476.5V483.7M881.7,481.9h1.4M883.1,482.0h1.4M886.5,470.3V483.2M885.1,482.0h1.4M886.5,476.4h1.4" stroke="#38e038" stroke-width="1.1" fill="none" opacity="0.92"/><path d="M304.0,393.5 L306.0,393.5 L308.0,393.4 L310.0,393.4 L312.0,393.4 L314.0,393.4 L316.0,393.3 L318.0,393.3 L320.0,393.3 L322.0,393.2 L324.0,393.2 L326.0,393.2 L328.0,393.2 L330.0,393.1 L332.0,393.1 L334.0,392.9 L336.0,392.6 L338.0,392.2 L340.0,391.6 L342.0,390.9 L344.0,390.1 L346.0,389.1 L348.0,388.0 L350.0,386.9 L352.0,385.7 L354.0,384.6 L356.0,383.6 L358.0,382.6 L360.0,381.6 L362.0,380.8 L364.0,380.1 L366.0,379.5 L368.0,379.0 L370.0,378.6 L372.0,378.4 L374.0,378.4 L376.0,378.6 L378.0,379.1 L380.0,379.6 L382.0,380.2 L384.0,380.9 L386.0,381.7 L388.0,382.6 L390.0,383.5 L392.0,384.4 L394.0,385.3 L396.0,386.1 L398.0,386.9 L400.0,387.6 L402.0,388.4 L404.0,389.1 L406.0,389.8 L408.0,390.3 L410.0,390.8 L412.0,391.0 L414.0,391.2 L416.0,391.2 L418.0,391.0 L420.0,390.8 L422.0,390.4 L424.0,389.9 L426.0,389.3 L428.0,388.8 L430.0,388.2 L432.0,387.8 L434.0,387.3 L436.0,387.0 L438.0,386.7 L440.0,386.5 L442.0,386.4 L444.0,386.3 L446.0,386.3 L448.0,386.5 L450.0,386.7 L452.0,387.1 L454.0,387.5 L456.0,388.0 L458.0,388.5 L460.0,389.2 L462.0,389.9 L464.0,390.6 L466.0,391.3 L468.0,392.0 L470.0,392.7 L472.0,393.3 L474.0,393.9 L476.0,394.5 L478.0,395.1 L480.0,395.6 L482.0,396.1 L484.0,396.6 L486.0,397.0 L488.0,397.4 L490.0,397.8 L492.0,398.1 L494.0,398.5 L496.0,398.8 L498.0,399.2 L500.0,399.6 L502.0,399.9 L504.0,400.3 L506.0,400.7 L508.0,401.1 L510.0,401.5 L512.0,401.9 L514.0,402.2 L516.0,402.6 L518.0,402.9 L520.0,403.2 L522.0,403.5 L524.0,403.7 L526.0,404.0 L528.0,404.2 L530.0,404.4 L532.0,404.5 L534.0,404.7 L536.0,404.8 L538.0,404.9 L540.0,404.9 L542.0,404.8 L544.0,404.6 L546.0,404.4 L548.0,404.1 L550.0,403.7 L552.0,403.2 L554.0,402.7 L556.0,402.1 L558.0,401.5 L560.0,400.9 L562.0,400.3 L564.0,399.7 L566.0,399.2 L568.0,398.6 L570.0,398.1 L572.0,397.6 L574.0,397.1 L576.0,396.5 L578.0,396.0 L580.0,395.5 L582.0,395.0 L584.0,394.5 L586.0,394.0 L588.0,393.5 L590.0,392.9 L592.0,392.4 L594.0,391.7 L596.0,390.7 L598.0,389.7 L600.0,388.4 L602.0,387.0 L604.0,385.4 L606.0,383.6 L608.0,381.7 L610.0,379.7 L612.0,377.7 L614.0,375.7 L616.0,373.7 L618.0,371.8 L620.0,369.8 L622.0,367.9 L624.0,365.9 L626.0,364.0 L628.0,362.0 L630.0,360.1 L632.0,358.2 L634.0,356.3 L636.0,354.5 L638.0,352.9 L640.0,351.5 L642.0,350.3 L644.0,349.2 L646.0,348.4 L648.0,347.8 L650.0,347.4 L652.0,347.3 L654.0,347.3 L656.0,347.4 L658.0,347.7 L660.0,348.2 L662.0,348.9 L664.0,349.7 L666.0,350.6 L668.0,351.6 L670.0,352.8 L672.0,354.1 L674.0,355.4 L676.0,356.7 L678.0,358.1 L680.0,359.4 L682.0,360.7 L684.0,361.9 L686.0,363.2 L688.0,364.5 L690.0,365.8 L692.0,367.0 L694.0,368.3 L696.0,369.6 L698.0,370.8 L700.0,372.0 L702.0,373.0 L704.0,374.0 L706.0,374.9 L708.0,375.8 L710.0,376.6 L712.0,377.3 L714.0,377.9 L716.0,378.6 L718.0,379.2 L720.0,380.0 L722.0,380.7 L724.0,381.5 L726.0,382.3 L728.0,383.2 L730.0,384.1 L732.0,385.0 L734.0,385.9 L736.0,386.9 L738.0,387.8 L740.0,388.7 L742.0,389.7 L744.0,390.7 L746.0,391.6 L748.0,392.6 L750.0,393.5 L752.0,394.4 L754.0,395.2 L756.0,396.1 L758.0,396.9 L760.0,397.7 L762.0,398.4 L764.0,399.1 L766.0,399.8 L768.0,400.5 L770.0,401.1 L772.0,401.7 L774.0,402.3 L776.0,402.8 L778.0,403.3 L780.0,403.8 L782.0,404.3 L784.0,404.8 L786.0,405.4 L788.0,405.9 L790.0,406.5 L792.0,407.1 L794.0,407.7 L796.0,408.3 L798.0,408.9 L800.0,409.6 L802.0,410.2 L804.0,410.8 L806.0,411.5 L808.0,412.1 L810.0,412.7 L812.0,413.3 L814.0,413.9 L816.0,414.5 L818.0,415.1 L820.0,415.7 L822.0,416.3 L824.0,417.0 L826.0,417.7 L828.0,418.5 L830.0,419.3 L832.0,420.2 L834.0,421.1 L836.0,422.1 L838.0,423.2 L840.0,424.3 L842.0,425.5 L844.0,426.7 L846.0,428.0 L848.0,429.4 L850.0,430.7 L852.0,432.2 L854.0,433.7 L856.0,435.3 L858.0,437.0 L860.0,438.7 L862.0,440.4 L864.0,442.2 L866.0,444.1 L868.0,446.0 L870.0,448.0 L872.0,449.9 L874.0,451.8 L876.0,453.7 L878.0,455.5 L880.0,457.3 L882.0,458.9 L884.0,460.6 L886.0,462.1 L888.0,463.6 L889.0,464.5" stroke="#e8281e" stroke-width="1.1" fill="none" opacity="1" stroke-linejoin="round"/></g><path d="M304.5,494.5V317.5H893.5V497.5M304.5,494.5H893.5" stroke="#d8d8d8" stroke-width="1" fill="none"/><path d="M893.5,331.5h3.5M893.5,358.7h3.5M893.5,385.9h3.5M893.5,413.2h3.5M893.5,440.3h3.5M893.5,467.3h3.5M304.2,494.5v3M412.2,494.5v3M520.2,494.5v3M628.2,494.5v3M736.2,494.5v3M844.2,494.5v3" stroke="#d8d8d8" stroke-width="1" fill="none"/><g transform="translate(309,323.5)"><rect x="0" y="0" width="15.5" height="11.5" fill="#fff"/><rect x="0.4" y="0.4" width="7.2" height="10.7" fill="#fbe3e0" stroke="#e0524a" stroke-width="0.9"/><rect x="7.9" y="0.4" width="7.2" height="10.7" fill="#dcecfa" stroke="#3d8fd6" stroke-width="0.9"/><path d="M1.6,3.2H6.6" stroke="#e0524a" stroke-width="1.3"/><path d="M9,3.2H14" stroke="#3d8fd6" stroke-width="1.3"/><path d="M1.6,5.8H6.6" stroke="#e0524a" stroke-width="1.3"/><path d="M9,5.8H14" stroke="#3d8fd6" stroke-width="1.3"/><path d="M1.6,8.4H6.6" stroke="#e0524a" stroke-width="1.3"/><path d="M9,8.4H14" stroke="#3d8fd6" stroke-width="1.3"/></g></svg><div class="ct" style="left:898px;top:325.5px;">0.87410</div><div class="ct" style="left:898px;top:352.7px;">0.87030</div><div class="ct" style="left:898px;top:379.9px;">0.86650</div><div class="ct" style="left:898px;top:407.2px;">0.86270</div><div class="ct" style="left:898px;top:434.3px;">0.85890</div><div class="ct" style="left:898px;top:461.3px;">0.85510</div>
<svg style="left:0;top:0" width="1600" height="700"><defs><clipPath id="cj"><rect x="964" y="317" width="589" height="178"/></clipPath></defs><path d="M991.4,317.5V433.4M1018.4,317.5V433.4M1045.4,317.5V433.4M1072.4,317.5V433.4M1099.4,317.5V433.4M1126.4,317.5V433.4M1153.4,317.5V433.4M1180.4,317.5V433.4M1207.4,317.5V433.4M1234.4,317.5V433.4M1261.4,317.5V433.4M1288.4,317.5V433.4M1315.4,317.5V433.4M1342.4,317.5V433.4M1369.4,317.5V433.4M1396.4,317.5V433.4M1423.4,317.5V433.4M1450.4,317.5V433.4M1477.4,317.5V433.4M1504.4,317.5V433.4M1531.4,317.5V433.4M964,326.0H1553M964,353.0H1553M964,380.2H1553M964,406.8H1553" stroke="#c2c6ca" stroke-width="1" stroke-dasharray="2.5 2.6" fill="none" opacity="0.95"/><path d="M991.4,436.2V494.5M1018.4,436.2V494.5M1045.4,436.2V494.5M1072.4,436.2V494.5M1099.4,436.2V494.5M1126.4,436.2V494.5M1153.4,436.2V494.5M1180.4,436.2V494.5M1207.4,436.2V494.5M1234.4,436.2V494.5M1261.4,436.2V494.5M1288.4,436.2V494.5M1315.4,436.2V494.5M1342.4,436.2V494.5M1369.4,436.2V494.5M1396.4,436.2V494.5M1423.4,436.2V494.5M1450.4,436.2V494.5M1477.4,436.2V494.5M1504.4,436.2V494.5M1531.4,436.2V494.5M964,462.9H1553" stroke="#c2c6ca" stroke-width="1" stroke-dasharray="2.5 2.6" fill="none" opacity="0.95"/><g clip-path="url(#cj)"><path d="M966.0,383.9V394.8M964.6,388.8h1.4M966.0,390.2h1.4M969.4,380.9V391.0M968.0,390.2h1.4M969.4,385.8h1.4M972.7,379.4V386.5M971.3,385.8h1.4M972.7,381.3h1.4M976.1,378.8V384.9M974.7,381.3h1.4M976.1,382.9h1.4M979.5,381.8V386.8M978.1,382.9h1.4M979.5,382.5h1.4M982.9,376.1V384.8M981.5,382.5h1.4M982.9,383.3h1.4M986.2,376.1V384.9M984.8,383.3h1.4M986.2,378.9h1.4M989.6,376.7V385.0M988.2,378.9h1.4M989.6,378.7h1.4M993.0,375.6V382.4M991.6,378.7h1.4M993.0,378.8h1.4M996.3,373.7V379.5M994.9,378.8h1.4M996.3,376.3h1.4M999.7,371.2V377.0M998.3,376.3h1.4M999.7,376.3h1.4M1003.1,372.1V378.9M1001.7,376.3h1.4M1003.1,376.7h1.4M1006.5,371.3V378.6M1005.1,376.7h1.4M1006.5,372.8h1.4M1009.8,371.5V382.0M1008.4,372.8h1.4M1009.8,374.9h1.4M1013.2,369.7V380.1M1011.8,374.9h1.4M1013.2,371.1h1.4M1016.6,363.3V373.7M1015.2,371.1h1.4M1016.6,367.6h1.4M1020.0,359.9V371.6M1018.6,367.6h1.4M1020.0,361.1h1.4M1023.3,359.7V362.2M1021.9,361.1h1.4M1023.3,360.9h1.4M1026.7,360.3V365.7M1025.3,360.9h1.4M1026.7,365.2h1.4M1030.1,360.9V375.5M1028.7,365.2h1.4M1030.1,372.6h1.4M1033.4,360.2V377.0M1032.0,372.6h1.4M1033.4,374.3h1.4M1036.8,371.8V379.1M1035.4,374.3h1.4M1036.8,375.6h1.4M1040.2,371.6V377.9M1038.8,375.6h1.4M1040.2,376.8h1.4M1043.6,373.8V379.2M1042.2,376.8h1.4M1043.6,378.0h1.4M1046.9,375.4V381.6M1045.5,378.0h1.4M1046.9,377.0h1.4M1050.3,376.2V379.1M1048.9,377.0h1.4M1050.3,378.5h1.4M1053.7,376.9V379.3M1052.3,378.5h1.4M1053.7,378.2h1.4M1057.0,375.6V381.9M1055.6,378.2h1.4M1057.0,379.9h1.4M1060.4,373.8V380.5M1059.0,379.9h1.4M1060.4,375.2h1.4M1063.8,372.6V382.2M1062.4,375.2h1.4M1063.8,374.9h1.4M1067.2,370.1V378.7M1065.8,374.9h1.4M1067.2,372.9h1.4M1070.5,365.5V374.8M1069.1,372.9h1.4M1070.5,371.9h1.4M1073.9,364.8V380.2M1072.5,371.9h1.4M1073.9,368.0h1.4M1077.3,360.4V368.4M1075.9,368.0h1.4M1077.3,363.3h1.4M1080.6,358.7V365.0M1079.2,363.3h1.4M1080.6,363.8h1.4M1084.0,360.4V368.9M1082.6,363.8h1.4M1084.0,363.4h1.4M1087.4,356.7V365.8M1086.0,363.4h1.4M1087.4,364.0h1.4M1090.8,357.9V368.1M1089.4,364.0h1.4M1090.8,365.1h1.4M1094.1,361.6V369.8M1092.7,365.1h1.4M1094.1,368.0h1.4M1097.5,363.0V374.7M1096.1,368.0h1.4M1097.5,373.4h1.4M1100.9,369.0V379.4M1099.5,373.4h1.4M1100.9,376.6h1.4M1104.3,375.6V379.1M1102.9,376.6h1.4M1104.3,377.9h1.4M1107.6,373.5V384.8M1106.2,377.9h1.4M1107.6,382.9h1.4M1111.0,381.9V385.3M1109.6,382.9h1.4M1111.0,382.5h1.4M1114.4,378.6V393.7M1113.0,382.5h1.4M1114.4,386.4h1.4M1117.7,384.3V389.6M1116.3,386.4h1.4M1117.7,385.0h1.4M1121.1,380.3V386.9M1119.7,385.0h1.4M1121.1,384.9h1.4M1124.5,383.1V385.8M1123.1,384.9h1.4M1124.5,385.2h1.4M1127.9,384.6V388.7M1126.5,385.2h1.4M1127.9,388.1h1.4M1131.2,384.7V392.5M1129.8,388.1h1.4M1131.2,387.3h1.4M1134.6,382.0V389.5M1133.2,387.3h1.4M1134.6,386.0h1.4M1138.0,382.8V388.8M1136.6,386.0h1.4M1138.0,383.5h1.4M1141.3,375.5V386.0M1139.9,383.5h1.4M1141.3,381.5h1.4M1144.7,375.3V388.2M1143.3,381.5h1.4M1144.7,385.8h1.4M1148.1,381.6V391.7M1146.7,385.8h1.4M1148.1,390.3h1.4M1151.5,385.4V391.0M1150.1,390.3h1.4M1151.5,387.7h1.4M1154.8,378.6V388.8M1153.4,387.7h1.4M1154.8,381.2h1.4M1158.2,376.4V385.8M1156.8,381.2h1.4M1158.2,377.6h1.4M1161.6,376.4V381.7M1160.2,377.6h1.4M1161.6,377.0h1.4M1164.9,371.5V378.8M1163.5,377.0h1.4M1164.9,372.9h1.4M1168.3,370.1V379.7M1166.9,372.9h1.4M1168.3,375.9h1.4M1171.7,372.1V382.6M1170.3,375.9h1.4M1171.7,380.4h1.4M1175.1,377.6V381.2M1173.7,380.4h1.4M1175.1,380.4h1.4M1178.4,374.7V382.7M1177.0,380.4h1.4M1178.4,378.6h1.4M1181.8,374.5V379.2M1180.4,378.6h1.4M1181.8,377.5h1.4M1185.2,372.2V387.1M1183.8,377.5h1.4M1185.2,383.0h1.4M1188.6,380.0V391.7M1187.2,383.0h1.4M1188.6,387.8h1.4M1191.9,379.4V390.3M1190.5,387.8h1.4M1191.9,385.0h1.4M1195.3,381.3V389.1M1193.9,385.0h1.4M1195.3,382.3h1.4M1198.7,377.9V386.0M1197.3,382.3h1.4M1198.7,380.6h1.4M1202.0,373.4V382.6M1200.6,380.6h1.4M1202.0,377.2h1.4M1205.4,373.0V379.9M1204.0,377.2h1.4M1205.4,375.2h1.4M1208.8,371.8V377.6M1207.4,375.2h1.4M1208.8,373.6h1.4M1212.2,366.1V378.0M1210.8,373.6h1.4M1212.2,374.6h1.4M1215.5,373.3V378.0M1214.1,374.6h1.4M1215.5,376.5h1.4M1218.9,372.7V377.8M1217.5,376.5h1.4M1218.9,375.3h1.4M1222.3,367.4V380.7M1220.9,375.3h1.4M1222.3,372.2h1.4M1225.6,371.1V373.4M1224.2,372.2h1.4M1225.6,372.0h1.4M1229.0,369.7V373.2M1227.6,372.0h1.4M1229.0,370.5h1.4M1232.4,369.4V375.7M1231.0,370.5h1.4M1232.4,372.9h1.4M1235.8,369.5V379.1M1234.4,372.9h1.4M1235.8,375.1h1.4M1239.1,374.4V377.8M1237.7,375.1h1.4M1239.1,376.1h1.4M1242.5,374.2V378.5M1241.1,376.1h1.4M1242.5,375.4h1.4M1245.9,372.0V380.2M1244.5,375.4h1.4M1245.9,375.7h1.4M1249.2,373.9V382.3M1247.8,375.7h1.4M1249.2,375.2h1.4M1252.6,369.2V380.3M1251.2,375.2h1.4M1252.6,372.7h1.4M1256.0,366.3V380.0M1254.6,372.7h1.4M1256.0,376.4h1.4M1259.4,372.3V380.2M1258.0,376.4h1.4M1259.4,376.8h1.4M1262.7,327.2V379.9M1261.3,376.8h1.4M1262.7,332.4h1.4M1266.1,325.5V336.7M1264.7,332.4h1.4M1266.1,334.5h1.4M1269.5,333.7V342.7M1268.1,334.5h1.4M1269.5,337.2h1.4M1272.9,334.6V337.8M1271.5,337.2h1.4M1272.9,335.3h1.4M1276.2,332.6V340.7M1274.8,335.3h1.4M1276.2,335.9h1.4M1279.6,334.3V340.8M1278.2,335.9h1.4M1279.6,336.5h1.4M1283.0,329.1V337.5M1281.6,336.5h1.4M1283.0,333.2h1.4M1286.3,328.9V336.4M1284.9,333.2h1.4M1286.3,331.6h1.4M1289.7,329.3V332.6M1288.3,331.6h1.4M1289.7,331.5h1.4M1293.1,328.6V332.9M1291.7,331.5h1.4M1293.1,330.4h1.4M1296.5,324.8V335.0M1295.1,330.4h1.4M1296.5,332.3h1.4M1299.8,330.8V334.2M1298.4,332.3h1.4M1299.8,332.7h1.4M1303.2,327.2V335.8M1301.8,332.7h1.4M1303.2,334.3h1.4M1306.6,331.1V335.9M1305.2,334.3h1.4M1306.6,335.2h1.4M1309.9,334.2V340.1M1308.5,335.2h1.4M1309.9,337.5h1.4M1313.3,334.7V341.8M1311.9,337.5h1.4M1313.3,336.9h1.4M1316.7,331.8V347.0M1315.3,336.9h1.4M1316.7,339.5h1.4M1320.1,336.4V340.2M1318.7,339.5h1.4M1320.1,338.0h1.4M1323.4,332.2V341.4M1322.0,338.0h1.4M1323.4,338.2h1.4M1326.8,333.7V343.4M1325.4,338.2h1.4M1326.8,336.3h1.4M1330.2,334.9V343.9M1328.8,336.3h1.4M1330.2,339.5h1.4M1333.5,330.6V350.2M1332.1,339.5h1.4M1333.5,344.3h1.4M1336.9,340.8V354.0M1335.5,344.3h1.4M1336.9,349.3h1.4M1340.3,348.8V359.1M1338.9,349.3h1.4M1340.3,355.3h1.4M1343.7,351.9V365.6M1342.3,355.3h1.4M1343.7,360.1h1.4M1347.0,355.5V361.5M1345.6,360.1h1.4M1347.0,359.2h1.4M1350.4,354.6V360.0M1349.0,359.2h1.4M1350.4,355.3h1.4M1353.8,353.2V361.4M1352.4,355.3h1.4M1353.8,356.5h1.4M1357.2,354.7V365.4M1355.8,356.5h1.4M1357.2,357.8h1.4M1360.5,356.0V362.2M1359.1,357.8h1.4M1360.5,360.5h1.4M1363.9,359.4V367.7M1362.5,360.5h1.4M1363.9,363.8h1.4M1367.3,361.2V369.2M1365.9,363.8h1.4M1367.3,366.4h1.4M1370.6,361.7V367.8M1369.2,366.4h1.4M1370.6,365.1h1.4M1374.0,360.1V366.0M1372.6,365.1h1.4M1374.0,362.2h1.4M1377.4,360.8V364.6M1376.0,362.2h1.4M1377.4,361.8h1.4M1380.8,356.7V366.7M1379.4,361.8h1.4M1380.8,360.0h1.4M1384.1,358.5V368.9M1382.7,360.0h1.4M1384.1,364.5h1.4M1387.5,361.5V370.1M1386.1,364.5h1.4M1387.5,364.7h1.4M1390.9,364.1V377.6M1389.5,364.7h1.4M1390.9,373.7h1.4M1394.2,368.8V388.6M1392.8,373.7h1.4M1394.2,388.0h1.4M1397.6,387.6V407.3M1396.2,388.0h1.4M1397.6,403.7h1.4M1401.0,402.9V415.0M1399.6,403.7h1.4M1401.0,411.7h1.4M1404.4,406.8V415.3M1403.0,411.7h1.4M1404.4,409.0h1.4M1407.7,402.5V413.5M1406.3,409.0h1.4M1407.7,403.0h1.4M1411.1,395.3V406.0M1409.7,403.0h1.4M1411.1,403.3h1.4M1414.5,397.7V404.2M1413.1,403.3h1.4M1414.5,399.8h1.4M1417.8,397.0V404.5M1416.4,399.8h1.4M1417.8,398.5h1.4M1421.2,396.8V400.4M1419.8,398.5h1.4M1421.2,397.6h1.4M1424.6,394.8V400.7M1423.2,397.6h1.4M1424.6,397.7h1.4M1428.0,389.4V403.9M1426.6,397.7h1.4M1428.0,395.4h1.4M1431.3,389.4V399.3M1429.9,395.4h1.4M1431.3,392.5h1.4M1434.7,387.0V400.1M1433.3,392.5h1.4M1434.7,393.1h1.4M1438.1,387.4V395.7M1436.7,393.1h1.4M1438.1,390.9h1.4M1441.5,389.0V395.8M1440.1,390.9h1.4M1441.5,390.1h1.4M1444.8,385.8V395.6M1443.4,390.1h1.4M1444.8,391.1h1.4M1448.2,384.9V391.8M1446.8,391.1h1.4M1448.2,389.0h1.4M1451.6,385.3V393.1M1450.2,389.0h1.4M1451.6,390.0h1.4M1454.9,385.0V390.6M1453.5,390.0h1.4M1454.9,388.6h1.4M1458.3,383.5V392.1M1456.9,388.6h1.4M1458.3,390.3h1.4M1461.7,389.3V401.9M1460.3,390.3h1.4M1461.7,392.8h1.4M1465.1,388.9V404.4M1463.7,392.8h1.4M1465.1,398.3h1.4M1468.4,396.7V402.5M1467.0,398.3h1.4M1468.4,397.3h1.4M1471.8,371.5V399.9M1470.4,397.3h1.4M1471.8,380.8h1.4M1475.2,378.5V382.7M1473.8,380.8h1.4M1475.2,379.7h1.4M1478.5,372.7V386.1M1477.1,379.7h1.4M1478.5,379.2h1.4M1481.9,377.7V383.1M1480.5,379.2h1.4M1481.9,380.0h1.4M1485.3,378.7V386.8M1483.9,380.0h1.4M1485.3,382.7h1.4M1488.7,381.2V391.8M1487.3,382.7h1.4M1488.7,390.3h1.4M1492.0,386.3V396.9M1490.6,390.3h1.4M1492.0,393.5h1.4M1495.4,389.5V399.1M1494.0,393.5h1.4M1495.4,395.0h1.4M1498.8,388.0V398.8M1497.4,395.0h1.4M1498.8,392.7h1.4M1502.1,391.0V400.3M1500.7,392.7h1.4M1502.1,396.6h1.4M1505.5,394.3V400.6M1504.1,396.6h1.4M1505.5,398.8h1.4M1508.9,395.4V405.0M1507.5,398.8h1.4M1508.9,404.4h1.4M1512.3,402.4V413.0M1510.9,404.4h1.4M1512.3,409.6h1.4M1515.6,408.4V415.8M1514.2,409.6h1.4M1515.6,410.9h1.4M1519.0,402.7V419.9M1517.6,410.9h1.4M1519.0,415.1h1.4M1522.4,409.1V425.5M1521.0,415.1h1.4M1522.4,414.3h1.4M1525.8,413.2V419.9M1524.4,414.3h1.4M1525.8,416.1h1.4M1529.1,413.1V421.5M1527.7,416.1h1.4M1529.1,418.2h1.4M1532.5,416.3V422.4M1531.1,418.2h1.4M1532.5,419.1h1.4M1535.9,417.2V428.5M1534.5,419.1h1.4M1535.9,422.7h1.4M1539.2,419.4V425.3M1537.8,422.7h1.4M1539.2,423.1h1.4M1542.6,418.0V426.6M1541.2,423.1h1.4M1542.6,423.8h1.4M1546.0,419.0V424.4M1544.6,423.8h1.4M1546.0,420.2h1.4" stroke="#38e038" stroke-width="1.1" fill="none" opacity="0.92"/><path d="M966.0,462.9V462.1M969.4,462.9V462.1M972.7,462.9V462.1M976.1,462.9V462.1M979.5,462.9V462.1M982.9,462.9V462.1M986.2,462.9V462.1M989.6,462.9V462.1M993.0,462.9V462.0M996.3,462.9V461.4M999.7,462.9V460.8M1003.1,462.9V460.2M1006.5,462.9V459.2M1009.8,462.9V458.2M1013.2,462.9V457.2M1016.6,462.9V456.1M1020.0,462.9V455.7M1023.3,462.9V455.4M1026.7,462.9V455.0M1030.1,462.9V455.9M1033.4,462.9V456.9M1036.8,462.9V457.9M1040.2,462.9V459.1M1043.6,462.9V460.2M1046.9,462.9V461.3M1050.3,462.9V462.1M1053.7,462.9V462.1M1057.0,462.9V461.8M1060.4,462.9V461.6M1063.8,462.9V461.0M1067.2,462.9V460.1M1070.5,462.9V459.2M1073.9,462.9V458.3M1077.3,462.9V457.7M1080.6,462.9V457.2M1084.0,462.9V456.8M1087.4,462.9V456.9M1090.8,462.9V457.8M1094.1,462.9V458.7M1097.5,462.9V459.8M1100.9,462.9V461.7M1104.3,462.9V462.1M1107.6,462.9V465.9M1111.0,462.9V468.3M1114.4,462.9V469.2M1117.7,462.9V469.4M1121.1,462.9V469.7M1124.5,462.9V470.0M1127.9,462.9V470.0M1131.2,462.9V470.0M1134.6,462.9V470.0M1138.0,462.9V470.0M1141.3,462.9V470.0M1144.7,462.9V470.0M1148.1,462.9V470.0M1151.5,462.9V469.9M1154.8,462.9V469.5M1158.2,462.9V469.2M1161.6,462.9V468.8M1164.9,462.9V468.5M1168.3,462.9V467.9M1171.7,462.9V467.4M1175.1,462.9V466.8M1178.4,462.9V466.3M1181.8,462.9V465.9M1185.2,462.9V465.7M1188.6,462.9V465.5M1191.9,462.9V465.3M1195.3,462.9V465.1M1198.7,462.9V464.9M1202.0,462.9V464.7M1205.4,462.9V464.6M1208.8,462.9V464.4M1212.2,462.9V464.3M1215.5,462.9V464.2M1218.9,462.9V464.0M1222.3,462.9V463.9M1225.6,462.9V463.8M1229.0,462.9V462.1M1232.4,462.9V462.1M1235.8,462.9V462.1M1239.1,462.9V462.1M1242.5,462.9V462.1M1245.9,462.9V462.1M1249.2,462.9V462.1M1252.6,462.9V462.1M1256.0,462.9V462.1M1259.4,462.9V462.1M1262.7,462.9V457.8M1266.1,462.9V451.4M1269.5,462.9V447.2M1272.9,462.9V445.2M1276.2,462.9V443.6M1279.6,462.9V442.6M1283.0,462.9V441.5M1286.3,462.9V441.1M1289.7,462.9V440.6M1293.1,462.9V440.3M1296.5,462.9V440.5M1299.8,462.9V440.7M1303.2,462.9V440.8M1306.6,462.9V441.2M1309.9,462.9V441.6M1313.3,462.9V441.9M1316.7,462.9V443.2M1320.1,462.9V444.7M1323.4,462.9V446.3M1326.8,462.9V448.5M1330.2,462.9V450.8M1333.5,462.9V453.4M1336.9,462.9V456.6M1340.3,462.9V459.7M1343.7,462.9V462.1M1347.0,462.9V464.1M1350.4,462.9V465.4M1353.8,462.9V466.3M1357.2,462.9V466.8M1360.5,462.9V467.3M1363.9,462.9V467.8M1367.3,462.9V468.3M1370.6,462.9V468.8M1374.0,462.9V469.2M1377.4,462.9V469.7M1380.8,462.9V470.3M1384.1,462.9V471.7M1387.5,462.9V473.0M1390.9,462.9V474.3M1394.2,462.9V475.7M1397.6,462.9V478.6M1401.0,462.9V482.0M1404.4,462.9V484.5M1407.7,462.9V486.7M1411.1,462.9V487.7M1414.5,462.9V488.1M1417.8,462.9V488.5M1421.2,462.9V488.5M1424.6,462.9V487.9M1428.0,462.9V487.3M1431.3,462.9V486.5M1434.7,462.9V485.1M1438.1,462.9V483.8M1441.5,462.9V482.4M1444.8,462.9V481.1M1448.2,462.9V479.5M1451.6,462.9V477.9M1454.9,462.9V476.4M1458.3,462.9V474.8M1461.7,462.9V473.3M1465.1,462.9V472.0M1468.4,462.9V470.6M1471.8,462.9V469.3M1475.2,462.9V467.9M1478.5,462.9V466.4M1481.9,462.9V465.0M1485.3,462.9V464.4M1488.7,462.9V464.3M1492.0,462.9V464.6M1495.4,462.9V465.2M1498.8,462.9V465.8M1502.1,462.9V466.7M1505.5,462.9V467.8M1508.9,462.9V469.0M1512.3,462.9V470.1M1515.6,462.9V471.2M1519.0,462.9V472.3M1522.4,462.9V473.5M1525.8,462.9V474.6M1529.1,462.9V475.7M1532.5,462.9V476.5M1535.9,462.9V477.2M1539.2,462.9V477.8M1542.6,462.9V478.5M1546.0,462.9V479.2" stroke="#d2d2d2" stroke-width="1.15" fill="none" opacity="0.85"/><path d="M964.0,464.6 L966.0,464.5 L968.0,464.5 L970.0,464.4 L972.0,464.4 L974.0,464.3 L976.0,464.3 L978.0,464.2 L980.0,464.1 L982.0,464.1 L984.0,464.0 L986.0,463.9 L988.0,463.7 L990.0,463.5 L992.0,463.3 L994.0,463.2 L996.0,463.0 L998.0,462.8 L1000.0,462.5 L1002.0,462.2 L1004.0,461.9 L1006.0,461.6 L1008.0,461.2 L1010.0,460.9 L1012.0,460.5 L1014.0,460.2 L1016.0,459.9 L1018.0,459.5 L1020.0,459.2 L1022.0,458.9 L1024.0,458.6 L1026.0,458.2 L1028.0,458.0 L1030.0,457.8 L1032.0,457.6 L1034.0,457.5 L1036.0,457.5 L1038.0,457.5 L1040.0,457.5 L1042.0,457.6 L1044.0,457.8 L1046.0,458.1 L1048.0,458.5 L1050.0,458.9 L1052.0,459.2 L1054.0,459.5 L1056.0,459.8 L1058.0,460.1 L1060.0,460.3 L1062.0,460.5 L1064.0,460.7 L1066.0,460.8 L1068.0,460.8 L1070.0,460.7 L1072.0,460.6 L1074.0,460.4 L1076.0,460.3 L1078.0,460.1 L1080.0,459.9 L1082.0,459.7 L1084.0,459.5 L1086.0,459.3 L1088.0,459.1 L1090.0,458.9 L1092.0,458.9 L1094.0,458.9 L1096.0,459.1 L1098.0,459.3 L1100.0,459.6 L1102.0,460.0 L1104.0,460.5 L1106.0,461.1 L1108.0,461.7 L1110.0,462.4 L1112.0,463.0 L1114.0,463.6 L1116.0,464.2 L1118.0,464.8 L1120.0,465.4 L1122.0,465.9 L1124.0,466.4 L1126.0,466.9 L1128.0,467.2 L1130.0,467.5 L1132.0,467.8 L1134.0,468.2 L1136.0,468.5 L1138.0,468.8 L1140.0,469.0 L1142.0,469.2 L1144.0,469.4 L1146.0,469.4 L1148.0,469.5 L1150.0,469.5 L1152.0,469.5 L1154.0,469.5 L1156.0,469.5 L1158.0,469.6 L1160.0,469.5 L1162.0,469.5 L1164.0,469.4 L1166.0,469.3 L1168.0,469.1 L1170.0,469.0 L1172.0,468.8 L1174.0,468.6 L1176.0,468.5 L1178.0,468.3 L1180.0,468.2 L1182.0,468.0 L1184.0,467.8 L1186.0,467.6 L1188.0,467.4 L1190.0,467.2 L1192.0,467.0 L1194.0,466.8 L1196.0,466.6 L1198.0,466.4 L1200.0,466.2 L1202.0,466.1 L1204.0,465.9 L1206.0,465.8 L1208.0,465.7 L1210.0,465.6 L1212.0,465.5 L1214.0,465.4 L1216.0,465.3 L1218.0,465.1 L1220.0,465.0 L1222.0,464.9 L1224.0,464.8 L1226.0,464.7 L1228.0,464.6 L1230.0,464.5 L1232.0,464.4 L1234.0,464.3 L1236.0,464.2 L1238.0,464.1 L1240.0,464.0 L1242.0,463.9 L1244.0,463.8 L1246.0,463.7 L1248.0,463.6 L1250.0,463.5 L1252.0,463.4 L1254.0,463.4 L1256.0,463.3 L1258.0,463.1 L1260.0,462.8 L1262.0,462.3 L1264.0,461.7 L1266.0,460.9 L1268.0,459.8 L1270.0,458.8 L1272.0,457.6 L1274.0,456.3 L1276.0,455.0 L1278.0,453.7 L1280.0,452.3 L1282.0,451.0 L1284.0,449.8 L1286.0,448.7 L1288.0,447.7 L1290.0,446.7 L1292.0,445.8 L1294.0,445.0 L1296.0,444.3 L1298.0,443.6 L1300.0,443.1 L1302.0,442.6 L1304.0,442.2 L1306.0,442.0 L1308.0,441.9 L1310.0,441.9 L1312.0,442.1 L1314.0,442.4 L1316.0,442.8 L1318.0,443.2 L1320.0,443.7 L1322.0,444.3 L1324.0,445.0 L1326.0,445.7 L1328.0,446.4 L1330.0,447.2 L1332.0,448.1 L1334.0,449.0 L1336.0,450.0 L1338.0,451.0 L1340.0,452.0 L1342.0,453.1 L1344.0,454.2 L1346.0,455.5 L1348.0,456.8 L1350.0,458.1 L1352.0,459.4 L1354.0,460.7 L1356.0,461.9 L1358.0,463.1 L1360.0,464.1 L1362.0,465.0 L1364.0,465.9 L1366.0,466.8 L1368.0,467.6 L1370.0,468.5 L1372.0,469.3 L1374.0,470.1 L1376.0,470.8 L1378.0,471.4 L1380.0,471.9 L1382.0,472.4 L1384.0,472.9 L1386.0,473.4 L1388.0,473.9 L1390.0,474.4 L1392.0,474.9 L1394.0,475.4 L1396.0,476.0 L1398.0,476.6 L1400.0,477.3 L1402.0,478.0 L1404.0,478.7 L1406.0,479.5 L1408.0,480.3 L1410.0,481.2 L1412.0,482.1 L1414.0,483.2 L1416.0,484.2 L1418.0,485.2 L1420.0,485.9 L1422.0,486.6 L1424.0,486.9 L1426.0,487.0 L1428.0,486.9 L1430.0,486.6 L1432.0,486.1 L1434.0,485.5 L1436.0,484.9 L1438.0,484.3 L1440.0,483.8 L1442.0,483.1 L1444.0,482.5 L1446.0,481.8 L1448.0,481.1 L1450.0,480.4 L1452.0,479.7 L1454.0,479.0 L1456.0,478.3 L1458.0,477.6 L1460.0,476.9 L1462.0,476.2 L1464.0,475.5 L1466.0,474.7 L1468.0,473.8 L1470.0,473.0 L1472.0,472.1 L1474.0,471.2 L1476.0,470.3 L1478.0,469.4 L1480.0,468.5 L1482.0,467.6 L1484.0,466.7 L1486.0,465.9 L1488.0,465.3 L1490.0,464.8 L1492.0,464.5 L1494.0,464.3 L1496.0,464.3 L1498.0,464.4 L1500.0,464.7 L1502.0,465.1 L1504.0,465.6 L1506.0,466.1 L1508.0,466.6 L1510.0,467.2 L1512.0,467.9 L1514.0,468.7 L1516.0,469.5 L1518.0,470.3 L1520.0,471.1 L1522.0,471.8 L1524.0,472.5 L1526.0,473.1 L1528.0,473.7 L1530.0,474.3 L1532.0,474.9 L1534.0,475.5 L1536.0,476.0 L1538.0,476.6 L1540.0,477.2 L1542.0,477.8 L1544.0,478.4 L1546.0,478.9 L1548.0,479.4 L1549.0,479.7" stroke="#f03030" stroke-width="1.1" fill="none" stroke-dasharray="2.2 2.2" opacity="1" stroke-linejoin="round"/></g><path d="M964,433.4V317.5H1553V497.5M964,494.5V436.2M964,494.5H1553" stroke="#d8d8d8" stroke-width="1" fill="none"/><rect x="963.5" y="433.0" width="589.5" height="2.9" fill="#c0c0c0"/><path d="M1553,326h3.5M1553,353h3.5M1553,380.2h3.5M1553,406.8h3.5M1553,441h3.5M1553,462.9h3.5M1553,488h3.5M1553,436.5h3.5M1553,493.5h3.5M964.2,494.5v3M1072.1,494.5v3M1180.0,494.5v3M1287.9,494.5v3M1395.8,494.5v3M1503.7,494.5v3" stroke="#d8d8d8" stroke-width="1" fill="none"/><g transform="translate(969,323.5)"><rect x="0" y="0" width="15.5" height="11.5" fill="#fff"/><rect x="0.4" y="0.4" width="7.2" height="10.7" fill="#fbe3e0" stroke="#e0524a" stroke-width="0.9"/><rect x="7.9" y="0.4" width="7.2" height="10.7" fill="#dcecfa" stroke="#3d8fd6" stroke-width="0.9"/><path d="M1.6,3.2H6.6" stroke="#e0524a" stroke-width="1.3"/><path d="M9,3.2H14" stroke="#3d8fd6" stroke-width="1.3"/><path d="M1.6,5.8H6.6" stroke="#e0524a" stroke-width="1.3"/><path d="M9,5.8H14" stroke="#3d8fd6" stroke-width="1.3"/><path d="M1.6,8.4H6.6" stroke="#e0524a" stroke-width="1.3"/><path d="M9,8.4H14" stroke="#3d8fd6" stroke-width="1.3"/></g></svg><div class="ct" style="left:1557.5px;top:320px;">149.460</div><div class="ct" style="left:1557.5px;top:347px;">148.270</div><div class="ct" style="left:1557.5px;top:374.2px;">147.080</div><div class="ct" style="left:1557.5px;top:400.8px;">145.890</div><div class="ct" style="left:1557.5px;top:435px;">0.6636</div><div class="ct" style="left:1557.5px;top:457.5px;">0.0000</div><div class="ct" style="left:1557.5px;top:482px;">-0.7333</div><div class="ct" style="left:990.5px;top:323.5px;letter-spacing:-0.3px;">USDJPY, H1:  US Dollar vs Yen</div><div class="ct" style="left:966px;top:439px;letter-spacing:-0.05px;">MACD(12,26,9) -0.3582 -0.3739</div>
<div class="a" style="left:297px;top:506px;width:1303px;height:24.5px;background:#f0f0f0;"></div><div class="a" style="left:303px;top:505px;width:87px;height:19.6px;background:#fff;border-right:1.6px solid #2a2a2a;border-bottom:1.6px solid #2a2a2a;"></div><div class="t" style="left:313.5px;top:508.5px;color:#111;transform:scaleX(0.89);transform-origin:0 0;">EURUSD,H1</div><div class="t" style="left:405px;top:508.5px;color:#8c8c8c;transform:scaleX(0.89);transform-origin:0 0;">USDCHF,H1</div><div class="t" style="left:497px;top:508.5px;color:#8c8c8c;transform:scaleX(0.89);transform-origin:0 0;">GBPUSD,H1</div><div class="t" style="left:588.5px;top:508.5px;color:#8c8c8c;transform:scaleX(0.89);transform-origin:0 0;">USDJPY,H1</div><div class="a" style="left:484px;top:508px;width:1.4px;height:16px;background:#9a9a9a;"></div><div class="a" style="left:576px;top:508px;width:1.4px;height:16px;background:#9a9a9a;"></div><svg style="left:1560px;top:511px" width="34" height="10"><path d="M7.4,1.4L3.6,5L7.4,8.6z" fill="#b4b4b4"/><path d="M25.4,1.4L29.2,5L25.4,8.6z" fill="#b4b4b4"/></svg>
<div class="a" style="left:0px;top:531px;width:1600px;height:169px;background:#fff;"></div><div class="hl" style="left:0px;top:530px;width:1600px;background:#b8b8b8;"></div><div class="a" style="left:0px;top:531px;width:16.5px;height:169px;background:#c4d2e2;"></div><svg style="left:3px;top:536px" width="9" height="10"><path d="M1,1 L8,9 M8,1 L1,9" stroke="#111" stroke-width="1.7" fill="none"/></svg><div class="a" style="left:17px;top:574px;width:1583px;height:21px;background:#ececec;"></div><div class="hl" style="left:17px;top:574px;width:1583px;background:#dcdcdc;"></div><div class="hl" style="left:17px;top:595px;width:1583px;background:#dcdcdc;"></div><div class="hl" style="left:17px;top:616px;width:1583px;background:#dcdcdc;"></div><div class="vl" style="left:186px;top:531px;height:86px;background:#dcdcdc;"></div><div class="vl" style="left:377px;top:531px;height:86px;background:#dcdcdc;"></div><div class="t" style="left:25px;top:535px;">Time</div><div class="t" style="left:194px;top:535px;">Source</div><div class="t" style="left:384px;top:535px;">Message</div><div class="a" style="left:26px;top:561.5px;width:4px;height:4px;background:#a6a6a6;border-radius:2px;"></div><div class="t" style="left:41px;top:555.5px;letter-spacing:-0.36px;">2025.09.24 11:27:02.315</div><div class="t" style="left:191px;top:555.5px;">Terminal</div><div class="t" style="left:381px;top:555.5px;letter-spacing:0px;">MetaTrader x64 build 5283 started for MetaQuotes Ltd.</div><div class="a" style="left:26px;top:582.5px;width:4px;height:4px;background:#a6a6a6;border-radius:2px;"></div><div class="t" style="left:41px;top:576.5px;letter-spacing:-0.36px;">2025.09.24 11:27:02.315</div><div class="t" style="left:191px;top:576.5px;">Terminal</div><div class="t" style="left:381px;top:576.5px;letter-spacing:-0.134px;">Windows 10 build 19045, 8 x Intel Core i7-2670QM  @ 2.20GHz, AVX, 1 / 3 Gb memory, 80 / 116 Gb disk, UAC, GMT+3</div><div class="a" style="left:26px;top:603.5px;width:4px;height:4px;background:#a6a6a6;border-radius:2px;"></div><div class="t" style="left:41px;top:597.5px;letter-spacing:-0.36px;">2025.09.24 11:27:02.315</div><div class="t" style="left:191px;top:597.5px;">Terminal</div><div class="t" style="left:381px;top:597.5px;letter-spacing:-0.125px;">C:\Users\sony\AppData\Roaming\MetaQuotes\Terminal\F762D69EEEA9B4430D7F17C82167C844</div>
<div class="a" style="left:0px;top:53px;width:294px;height:22px;background:#c4d2e2;"></div><div class="t" style="right:1528.5px;top:56px;">Market Watch</div><svg style="left:279px;top:59px" width="10" height="10"><path d="M1,1 L9,9 M9,1 L1,9" stroke="#111" stroke-width="1.8" fill="none"/></svg><div class="a" style="left:0px;top:75px;width:294px;height:172px;background:#fff;"></div><div class="a" style="left:0px;top:75px;width:277px;height:23px;background:#fefefe;"></div><div class="t" style="left:3px;top:80px;">Symbol</div><div class="t" style="right:1444px;top:80px;">Bid</div><div class="t" style="right:1388px;top:80px;">Ask</div><div class="t" style="left:229px;top:80px;">Daily ...</div><div class="a" style="left:0px;top:98.2px;width:277px;height:21.17px;background:#1a78d2;"></div><div class="t" style="left:18.5px;top:100.7px;color:#fff;transform:scaleX(0.885);transform-origin:0 0;">EURUSD</div><div class="t" style="left:114.5px;top:100.7px;color:#fff;">1.11021</div><div class="t" style="right:1387px;top:100.7px;color:#fff;">1.11026</div><div class="t" style="right:1329px;top:100.7px;color:#fff;">0.72%</div><svg style="left:3px;top:103.2px" width="10" height="10"><path d="M1,2.2 L6.2,7.4 M2.4,7.6 H6.4 V3.6" stroke="#e05050" stroke-width="1.2" fill="none"/></svg><div class="a" style="left:0px;top:119.37px;width:277px;height:21.17px;background:#efefef;"></div><div class="t" style="left:18.5px;top:121.87px;color:#1a1a1a;transform:scaleX(0.885);transform-origin:0 0;">GBPUSD</div><div class="t" style="left:114.5px;top:121.87px;color:#1f1fd0;">1.30193</div><svg style="left:3px;top:124.37px" width="10" height="10"><path d="M1,2.2 L6.2,7.4 M2.4,7.6 H6.4 V3.6" stroke="#d83a3a" stroke-width="1.2" fill="none"/></svg><div class="hl" style="left:0px;top:139.54000000000002px;width:277px;background:#e3e3e3;"></div><div class="a" style="left:0px;top:140.54000000000002px;width:277px;height:21.17px;background:#fff;"></div><div class="t" style="left:18.5px;top:143.04000000000002px;color:#1a1a1a;transform:scaleX(0.885);transform-origin:0 0;">USDCHF</div><div class="t" style="left:114.5px;top:143.04000000000002px;color:#e02020;">0.85391</div><div class="a" style="left:4.5px;top:148.54000000000002px;width:4px;height:4px;background:#a0a0a0;border-radius:2px;"></div><div class="hl" style="left:0px;top:160.71000000000004px;width:277px;background:#e3e3e3;"></div><div class="a" style="left:0px;top:161.71000000000004px;width:277px;height:21.17px;background:#efefef;"></div><div class="t" style="left:18.5px;top:164.21000000000004px;color:#1a1a1a;transform:scaleX(0.885);transform-origin:0 0;">USDJPY</div><div class="t" style="left:114.5px;top:164.21000000000004px;color:#e02020;">146.342</div><svg style="left:3px;top:166.71000000000004px" width="10" height="10"><path d="M1,7.8 L6.2,2.6 M2.4,2.4 H6.4 V6.4" stroke="#2fa84f" stroke-width="1.2" fill="none"/></svg><div class="hl" style="left:0px;top:181.88000000000005px;width:277px;background:#e3e3e3;"></div><div class="a" style="left:0px;top:182.88000000000005px;width:277px;height:21.17px;background:#fff;"></div><div class="t" style="left:18.5px;top:185.38000000000005px;color:#1a1a1a;transform:scaleX(0.885);transform-origin:0 0;">USDCNH</div><div class="t" style="left:114.5px;top:185.38000000000005px;color:#e02020;">7.12873</div><svg style="left:3px;top:187.88000000000005px" width="10" height="10"><path d="M1,2.2 L6.2,7.4 M2.4,7.6 H6.4 V3.6" stroke="#d83a3a" stroke-width="1.2" fill="none"/></svg><div class="hl" style="left:0px;top:203.05000000000007px;width:277px;background:#e3e3e3;"></div><div class="a" style="left:0px;top:204.05000000000007px;width:277px;height:21.17px;background:#efefef;"></div><div class="t" style="left:18.5px;top:206.55000000000007px;color:#1a1a1a;transform:scaleX(0.885);transform-origin:0 0;">AUDUSD</div><div class="t" style="left:114.5px;top:206.55000000000007px;color:#1f1fd0;">0.67341</div><svg style="left:3px;top:209.05000000000007px" width="10" height="10"><path d="M1,2.2 L6.2,7.4 M2.4,7.6 H6.4 V3.6" stroke="#d83a3a" stroke-width="1.2" fill="none"/></svg><div class="hl" style="left:0px;top:224.22000000000008px;width:277px;background:#e3e3e3;"></div><div class="a" style="left:0px;top:225.22000000000008px;width:277px;height:21.17px;background:#fff;"></div><div class="t" style="left:18.5px;top:227.72000000000008px;color:#1a1a1a;transform:scaleX(0.885);transform-origin:0 0;">NZDUSD</div><div class="t" style="left:114.5px;top:227.72000000000008px;color:#1f1fd0;">0.61372</div><svg style="left:3px;top:230.22000000000008px" width="10" height="10"><path d="M1,7.8 L6.2,2.6 M2.4,2.4 H6.4 V6.4" stroke="#2fa84f" stroke-width="1.2" fill="none"/></svg><div class="hl" style="left:0px;top:245.3900000000001px;width:277px;background:#e3e3e3;"></div><div class="vl" style="left:106px;top:75px;height:172px;background:#dadada;"></div><div class="vl" style="left:162px;top:75px;height:172px;background:#dadada;"></div><div class="vl" style="left:218px;top:75px;height:172px;background:#dadada;"></div><div class="vl" style="left:276.5px;top:75px;height:172px;background:#dadada;"></div><div class="hl" style="left:0px;top:97px;width:277px;background:#e0e0e0;"></div><div class="a" style="left:277px;top:75px;width:17px;height:172px;background:#f0f0f0;"></div><svg style="left:280px;top:82px" width="10" height="8"><path d="M1,6.5 L5,2 L9,6.5" stroke="#444" stroke-width="1.5" fill="none"/></svg><div class="a" style="left:277.5px;top:94px;width:15.5px;height:27px;background:#cdcdcd;"></div><div class="a" style="left:0px;top:247px;width:296px;height:31px;background:#f0f0f0;"></div><div class="a" style="left:0px;top:246.4px;width:68.5px;height:23.6px;background:#fff;"></div><svg style="left:0;top:0" width="300" height="300"><path d="M0,270.2H68.6V249.8H296" stroke="#222" stroke-width="1.5" fill="none"/></svg><div class="t" style="left:10px;top:252.39999999999998px;">Symbols</div><div class="t" style="left:80px;top:252.39999999999998px;color:#9a9a9a;">Details</div><div class="a" style="left:0px;top:278px;width:296px;height:24px;background:#c4d2e2;"></div><div class="t" style="right:1550.5px;top:282.4px;">Navigator</div><div class="a" style="left:0px;top:302px;width:296px;height:200.5px;background:#fff;"></div><div class="a" style="left:0px;top:502px;width:296px;height:29px;background:#f0f0f0;"></div><div class="a" style="left:0px;top:500px;width:73px;height:22.4px;background:#fff;"></div><svg style="left:0;top:0" width="300" height="540"><path d="M0,522.4H73.2V502.6H296" stroke="#222" stroke-width="1.5" fill="none"/></svg><div class="t" style="left:10px;top:504.5px;">Common</div><div class="t" style="left:84px;top:504.5px;color:#9a9a9a;">Favorites</div><div class="t" style="left:22px;top:305.4px;">MetaTrader</div><div class="t" style="left:44px;top:325.7px;">Accounts</div><div class="t" style="left:44px;top:346px;">Indicators</div><div class="t" style="left:44px;top:366.3px;">Expert Advisors</div><div class="t" style="left:44px;top:386.6px;">Scripts</div><div class="t" style="left:44px;top:406.9px;letter-spacing:-0.45px;">Services</div><div class="t" style="left:44px;top:427.2px;">Market</div>
<svg style="left:0;top:0" width="1600" height="700" fill="none" stroke-linecap="round" stroke-linejoin="round"><path d="M7.5,322V338M7.5,333.4H20M7.5,346V366M16,353.6H20M16,374H20M16,394.4H20M7.5,404V424M7.5,414.6H20M16,435H20" stroke="#b8b8b8" stroke-width="1" stroke-dasharray="1 1.5" stroke-linecap="butt"/><path d="M4.6,349.6L8.8,353.6L4.6,357.6" stroke="#8a8a8a" stroke-width="1.2"/><path d="M4.6,370L8.8,374L4.6,378" stroke="#8a8a8a" stroke-width="1.2"/><path d="M4.6,390.4L8.8,394.4L4.6,398.4" stroke="#8a8a8a" stroke-width="1.2"/><path d="M4.6,431L8.8,435L4.6,439" stroke="#8a8a8a" stroke-width="1.2"/><path d="M3,308.4L8,306L8,311z" fill="#f3b61a" stroke="none"/><path d="M8.4,305.8L14.2,308.6L11.4,312.4L8.4,311z" fill="#f3b61a" stroke="none"/><path d="M2.8,310L7.6,312.6V319.4L2.8,316z" fill="#2f86cf" stroke="none"/><path d="M8.4,312.8L13.4,310.2V316.2L8.4,319.6z" fill="#2fb64c" stroke="none"/><circle cx="32.6" cy="329.6" r="2.9" stroke="#1d6fa8" stroke-width="1.3"/><path d="M27.4,339.4Q27.4,334.4 32.6,334.4Q37.6,334.4 37.6,339.4z" fill="#cfe7f9" stroke="#1d6fa8" stroke-width="1.3"/><path d="M27.8,327.4Q25,327.6 25.2,330.2Q25.4,331.8 27,332M22.6,339.2Q22.6,335.4 26,334.8" stroke="#1d6fa8" stroke-width="1.3"/><path d="M23.4,356H25.6L28,350.6L31,357.4L34.4,349.4L36.4,352.6" stroke="#1d6fa8" stroke-width="1.4"/><path d="M24,359.6L28.6,354.6L32,356.2L37,349.8" stroke="#2fb64c" stroke-width="1.2" stroke-dasharray="2 1.6"/><path d="M22.6,370.6L30.2,367.4L37.6,370.6L30.2,374z" fill="#cfe7f9" stroke="#1d6fa8" stroke-width="1.3"/><path d="M25.6,373V377.4Q30.2,380.4 34.8,377.4V373" stroke="#1d6fa8" stroke-width="1.3"/><path d="M23.2,371.4V378.4" stroke="#1d6fa8" stroke-width="1.2"/><path d="M26,388H35V399.4H24.4Q23,399.4 23,398V396.6H26z" fill="#f8c81c" stroke="#e0a812" stroke-width="1"/><path d="M30,407.4L32,409.4L35,408.6L35.8,411.6L38,413.4L36.4,415.2L37.4,418.2L34.4,418.8L32.6,421.4L30,420L27.4,421.4L25.6,418.8L22.6,418.2L23.6,415.2L22,413.4L24.2,411.6L25,408.6L28,409.4z" fill="#dceefb" stroke="#1d6fa8" stroke-width="1.2"/><path d="M28.6,412L32.6,414.6L28.6,417.2z" fill="#1d6fa8" stroke="none"/><path d="M27.4,430.4V429Q27.4,426.8 30,426.8Q32.6,426.8 32.6,429V430.4" stroke="#d7a316" stroke-width="1.3"/><path d="M24.8,430.4H35.2L36,441.4H24z" fill="#f8c81c" stroke="#e3ae12" stroke-width="1"/></svg>
<svg style="left:0;top:0" width="1600" height="700" fill="none" stroke-linecap="round" stroke-linejoin="round"><rect x="545" y="21" width="30" height="29.5" fill="#d8e5f2"/><path d="M545,50.5V21H575" stroke="#c2cedb" stroke-width="1" stroke-linecap="butt"/><rect x="719.5" y="21" width="30" height="29.5" fill="#d8e5f2"/><path d="M719.5,50.5V21H749.5" stroke="#c2cedb" stroke-width="1" stroke-linecap="butt"/><rect x="832" y="21" width="30" height="29.5" fill="#d8e5f2"/><path d="M832,50.5V21H862" stroke="#c2cedb" stroke-width="1" stroke-linecap="butt"/><rect x="1285" y="21" width="30" height="29.5" fill="#d8e5f2"/><path d="M1285,50.5V21H1315" stroke="#c2cedb" stroke-width="1" stroke-linecap="butt"/><path d="M126.5,22V50" stroke="#a2a2a2" stroke-width="1.3" stroke-linecap="butt"/><path d="M296.5,22V50" stroke="#a2a2a2" stroke-width="1.3" stroke-linecap="butt"/><path d="M507.5,22V50" stroke="#a2a2a2" stroke-width="1.3" stroke-linecap="butt"/><path d="M611.5,22V50" stroke="#a2a2a2" stroke-width="1.3" stroke-linecap="butt"/><path d="M715.5,22V50" stroke="#a2a2a2" stroke-width="1.3" stroke-linecap="butt"/><path d="M786.5,22V50" stroke="#a2a2a2" stroke-width="1.3" stroke-linecap="butt"/><path d="M898.5,22V50" stroke="#a2a2a2" stroke-width="1.3" stroke-linecap="butt"/><path d="M825,22V50" stroke="#b5b5b5" stroke-width="1.4" stroke-dasharray="1.4 1.6" stroke-linecap="butt"/><path d="M1146,38V50" stroke="#b5b5b5" stroke-width="1.4" stroke-dasharray="1.4 1.6" stroke-linecap="butt"/><path d="M10.8,27V43.8H27.5" stroke="#c6c6c6" stroke-width="1.3"/><path d="M13.5,33.4L16.8,33L21.5,37.4L25.4,33.2L27.8,33.2" stroke="#1d6fa8" stroke-width="1.7"/><path d="M35,35.6h8.4l-4.2,4.2z" fill="#111" stroke="none"/><rect x="53.6" y="26.5" width="19" height="14.4" rx="2.6" fill="#e4f1fb" stroke="#1d6fa8" stroke-width="1.4"/><path d="M55.5,41.5L57.8,44.6H68.6L70.8,41.5" fill="#cfe7f9" stroke="#1d6fa8" stroke-width="1.3"/><path d="M57,33.4L60.8,30.6L64.6,32.6L69.2,29.2" stroke="#1d6fa8" stroke-width="1.3"/><path d="M57.4,38.4V37M60.2,38.4V36M63,38.4V36.8M65.8,38.4V35.6M68.6,38.4V34.6" stroke="#2fb64c" stroke-width="1.3" stroke-linecap="butt"/><path d="M79,35.6h8.4l-4.2,4.2z" fill="#111" stroke="none"/><rect x="99.4" y="27.4" width="17.6" height="17.6" rx="2.6" fill="#f8c81c" stroke="#dba514" stroke-width="1"/><path d="M175.4,31.5V29.6Q175.4,27 178,27Q180.4,27 180.4,29.6V31.5M178.6,31.5V29.6Q178.6,27.6 181,27.6Q183.4,27.6 183.4,29.6V31.5" stroke="#d7a316" stroke-width="1.3"/><path d="M172.8,31.2H185.4L186.8,44.6H171.4z" fill="#f8c81c" stroke="#e3ae12" stroke-width="1"/><path d="M172.8,31.2H175L174.4,44.6H171.4z" fill="#e2aa16" stroke="none"/><circle cx="211.8" cy="36" r="1.9" stroke="#b9b9b9" stroke-width="1.2"/><path d="M207.6,32.4Q205.4,36 207.6,39.6M216,32.4Q218.2,36 216,39.6M204.6,30.4Q200.8,36 204.6,41.6M219,30.4Q222.8,36 219,41.6" stroke="#b9b9b9" stroke-width="1.2"/><path d="M240.2,38.2Q236.4,38.2 236.6,35.2Q237,32.6 240,32.8Q240.6,28.4 245,28.4Q249,28.4 249.8,32Q253.6,32 253.6,35.2Q253.6,38.2 250,38.2z" fill="#e4e4e4" stroke="#b9b9b9" stroke-width="1.2"/><path d="M245,38.4V42M237,42.6H253" stroke="#b9b9b9" stroke-width="1.2"/><path d="M276,44.4A8.6,8.6 0 1 1 286.6,33" stroke="#b9b9b9" stroke-width="1.2"/><path d="M278.4,40.4A4.8,4.8 0 1 1 283.4,35" stroke="#b9b9b9" stroke-width="1.2"/><circle cx="276.8" cy="34.6" r="1.6" stroke="#b9b9b9" stroke-width="1.1"/><circle cx="283" cy="40.6" r="5" fill="#ececec" stroke="#b9b9b9" stroke-width="1.2"/><path d="M280.4,40.6h5.2M283,38v5.2" stroke="#b9b9b9" stroke-width="1.2"/><rect x="309.6" y="30.4" width="11" height="11" rx="2" fill="#fde0d8" stroke="#dc5a52" stroke-width="1.3"/><path d="M418.2,27.6H430.4V40.4L426,44.6H418.2z" fill="#e6e6e6" stroke="#c4c4c4" stroke-width="1.2"/><path d="M430.4,40.4H426V44.6" stroke="#c4c4c4" stroke-width="1.1"/><path d="M421.2,35h5.6M424,32.2v5.6" stroke="#b4b4b4" stroke-width="1.2"/><path d="M521.2,33V44.4M518.4,41H521.2M521.2,35H524M532,27V40M529.2,30H532M532,37.4H535.6" stroke="#2fb64c" stroke-width="1.5" stroke-linecap="butt"/><path d="M555.4,27.4V44.4M564.6,27.4V44.4" stroke="#2fb64c" stroke-width="1.4"/><rect x="553" y="29.6" width="4.8" height="11.6" rx="1.4" fill="#dbf3db" stroke="#2fb64c" stroke-width="1.5"/><rect x="562.2" y="29.6" width="4.8" height="11.6" rx="1.4" fill="#dbf3db" stroke="#2fb64c" stroke-width="1.5"/><path d="M584.4,38.4H586.6L589.6,32.6L592.8,40.8L597,31.4L599.6,37H601.6" stroke="#2fb64c" stroke-width="1.5"/><circle cx="628.6" cy="34" r="6" fill="#cfe7f9" stroke="#1d6fa8" stroke-width="1.4"/><path d="M633.0,38.6L639.2,44.8" stroke="#1d6fa8" stroke-width="1.6"/><path d="M625.6,34h6" stroke="#1d6fa8" stroke-width="1.4"/><path d="M628.6,31v6" stroke="#1d6fa8" stroke-width="1.4"/><circle cx="661" cy="34" r="6" fill="#cfe7f9" stroke="#1d6fa8" stroke-width="1.4"/><path d="M665.4,38.6L671.6,44.8" stroke="#1d6fa8" stroke-width="1.6"/><path d="M658,34h6" stroke="#1d6fa8" stroke-width="1.4"/><rect x="688.8" y="27.4" width="16.6" height="16.8" rx="2" fill="#cfe7f9" stroke="#1d6fa8" stroke-width="1.4"/><path d="M697,27.4V44.2M688.8,35.8H705.4" stroke="#1d6fa8" stroke-width="1.4"/><path d="M726.6,28.6V41.6" stroke="#2fb64c" stroke-width="1.1"/><rect x="725" y="30.4" width="3.2" height="8.4" rx="1" fill="#cdeecd" stroke="#2fb64c" stroke-width="1.2"/><path d="M731.4,28.6V41.6" stroke="#2fb64c" stroke-width="1.1"/><rect x="729.8" y="30.4" width="3.2" height="8.4" rx="1" fill="#cdeecd" stroke="#2fb64c" stroke-width="1.2"/><path d="M735,35.2H741.4M738.8,32.4L741.6,35.2L738.8,38" stroke="#2fb64c" stroke-width="1.3"/><path d="M744.6,27.2V42.6" stroke="#1d6fa8" stroke-width="1.5" stroke-linecap="butt"/><path d="M725,45.4H745" stroke="#aeb6c0" stroke-width="1.2"/><path d="M759.0,28.6V41.6" stroke="#2fb64c" stroke-width="1.1"/><rect x="757.4" y="30.4" width="3.2" height="8.4" rx="1" fill="#cdeecd" stroke="#2fb64c" stroke-width="1.2"/><path d="M763.8000000000001,28.6V41.6" stroke="#2fb64c" stroke-width="1.1"/><rect x="762.2" y="30.4" width="3.2" height="8.4" rx="1" fill="#cdeecd" stroke="#2fb64c" stroke-width="1.2"/><path d="M768,27.2V42.6" stroke="#1d6fa8" stroke-width="1.5" stroke-linecap="butt"/><path d="M771.2,35.2H777.4M774,32.4L771.2,35.2L774,38" stroke="#1d6fa8" stroke-width="1.3"/><path d="M757.6,45.4H777.6" stroke="#aeb6c0" stroke-width="1.2"/><path d="M800,45H798.4Q796.2,45 796.2,42.8V28.6Q796.2,26.4 798.4,26.4H812.6Q814.8,26.4 814.8,28.6V33" stroke="#1d6fa8" stroke-width="1.5" stroke-dasharray="2.6 2.4" stroke-linecap="butt"/><path d="M801.6,45V38.6Q801.6,37.2 803,37.2H804.6L805.8,35.4H810.6L811.8,37.2H813.4Q814.8,37.2 814.8,38.6V45z" fill="#cfe7f9" stroke="#1d6fa8" stroke-width="1.4"/><circle cx="808.2" cy="40.8" r="2" stroke="#1d6fa8" stroke-width="1.3"/><path d="M841,29.4L853.4,34.6L848.6,36.8L853,41.2L851,43L846.6,38.8L844.6,43z" fill="#cfe7f9" stroke="#1d6fa8" stroke-width="1.4"/><path d="M871.4,36H878M882,36H888.6M880,27.4V34M880,38V44.6" stroke="#1d6fa8" stroke-width="1.5" stroke-linecap="butt"/><circle cx="880" cy="36" r="2" fill="#cfe7f9" stroke="#1d6fa8" stroke-width="1.3"/><path d="M918,26.4V33.4M918,38.6V45.4" stroke="#1d6fa8" stroke-width="1.5" stroke-linecap="butt"/><circle cx="918" cy="36" r="2.4" fill="#cfe7f9" stroke="#1d6fa8" stroke-width="1.3"/><circle cx="1455.2" cy="34" r="5.1" stroke="#1a1a1a" stroke-width="1.5"/><path d="M1459,37.9L1462.6,41.6" stroke="#1a1a1a" stroke-width="1.7"/><circle cx="1488.4" cy="36.4" r="6.2" stroke="#333" stroke-width="1.3"/><circle cx="1488.4" cy="34" r="2.2" stroke="#333" stroke-width="1.2"/><path d="M1484.2,40.8Q1488.4,36.6 1492.6,40.8" stroke="#333" stroke-width="1.2"/><circle cx="1498.4" cy="32.6" r="7.4" fill="#e8382a" stroke="none"/><path d="M1531.6,27.4L1535.6,31.6H1533.4V35.4H1529.8V31.6H1527.6z" fill="#d9f3dd" stroke="#2fb64c" stroke-width="1.2"/><rect x="1548.4" y="30.2" width="46.6" height="13.4" fill="#fff" stroke="#929292" stroke-width="1.2"/><path d="M1548.6,30V43.6" stroke="#3cae55" stroke-width="1.4"/></svg><div class="t" style="left:101.7px;top:28.6px;color:#d18b12;font-weight:bold;font-size:15px;width:13px;text-align:center;">$</div><div class="t" style="left:136.6px;top:28.200000000000003px;color:#1d6fa8;font-size:13.4px;letter-spacing:-0.2px;-webkit-text-stroke:0.35px #1d6fa8;transform:scaleX(0.84);transform-origin:0 0;">IDE</div><div class="t" style="left:329px;top:28.5px;font-size:13px;letter-spacing:-0.1px;">Algo Trading</div><div class="t" style="left:438px;top:28.5px;color:#b2b2b2;font-size:13px;letter-spacing:-0.15px;">New Order</div><div class="t" style="left:1160px;top:29px;color:#1f639f;">M1</div><div class="t" style="left:1193px;top:29px;color:#1f639f;">M5</div><div class="t" style="left:1222px;top:29px;color:#1f639f;">M15</div><div class="t" style="left:1255.5px;top:29px;color:#1f639f;">M30</div><div class="t" style="left:1292px;top:29px;color:#1f639f;">H1</div><div class="t" style="left:1325.6px;top:29px;color:#1f639f;">H4</div><div class="t" style="left:1358.6px;top:29px;color:#1f639f;">D1</div><div class="t" style="left:1390.4px;top:29px;color:#1f639f;">W1</div><div class="t" style="left:1422px;top:29px;color:#1f639f;">MI</div><div class="t" style="left:1494.8px;top:24.799999999999997px;color:#fff;font-weight:bold;font-size:11.5px;width:7px;text-align:center;">1</div><div class="t" style="left:1525.4px;top:33.3px;color:#2fb64c;font-weight:bold;font-size:8px;letter-spacing:-0.1px;">LVL</div>
<svg style="left:0;top:0" width="1600" height="700"><defs><filter id="gb" x="-10%" y="-30%" width="120%" height="160%"><feGaussianBlur stdDeviation="2.6"/></filter></defs><path d="M921,-12L1161,-12L1159,20Q1157,38 1143,49Q1118,62 1041,62Q964,62 939,49Q925,38 923,20Z" fill="#f6f6f6" filter="url(#gb)"/></svg><svg style="left:0;top:0" width="1600" height="700" fill="none" stroke-linejoin="miter"><path d="M1089.3,11.7H1096.3V26H1089.3z" stroke="#20d6e8" stroke-width="2" stroke-linejoin="round"/><path d="M1101.7,20.1H1111.2V26H1101L1096.1,30.3V36.6H1111.5V43.5H1095.5L1089.5,35.6V32.3z" stroke="#20d6e8" stroke-width="2" stroke-linejoin="round"/><path d="M1069.70,11.80L1074.95,11.80M1074.43,14.88L1074.43,22.60L1067.30,22.60M1067.30,14.88L1067.30,23.65L1066.40,25.90L1062.73,26.50M1061.90,14.88L1061.90,22.60L1049.30,22.60M1055.98,26.43L1059.88,26.43M1051.48,14.95L1055.23,18.70L1055.23,22.60M1046.68,14.88L1046.68,22.60L1018.40,22.60L1018.40,18.25M1042.40,26.43L1046.83,26.43M1038.58,14.88L1038.58,22.60M1037.68,11.65L1039.48,11.65M1031.38,22.60L1031.38,15.25L1022.75,16.60M1025.75,15.85L1031.75,10.90M1013.68,22.60L1013.68,14.88L1009.03,14.88L1009.03,19.23L1013.68,19.23M1013.68,22.60L1003.63,22.60M1010.23,12.93L1012.03,12.93M1003.63,12.93L1003.63,22.60M999.58,14.88L999.58,22.60L979.93,22.60M995.53,26.43L999.73,26.43M992.30,14.88L992.30,22.60M991.40,12.18L993.20,12.18M982.33,15.33L985.63,18.93L985.63,22.60M978.73,14.88L978.73,21.40L977.90,23.05L973.03,23.35" stroke="#585858" stroke-width="1.85" stroke-linecap="butt" stroke-linejoin="round"/></svg><div class="t" style="left:972px;top:31px;color:#666;font-size:12.6px;letter-spacing:0.72px;line-height:16px;transform:scaleX(1.18);transform-origin:0 0;">TradingFinder</div>
<div class="a" style="left:124px;top:107px;width:214px;height:474px;background:#f2f2f2;border:1px solid #cfcfcf;box-sizing:border-box;box-shadow:2px 2px 4px rgba(0,0,0,0.38);"></div><svg style="left:0;top:0" width="1600" height="700"><defs><linearGradient id="hg" gradientUnits="userSpaceOnUse" x1="126" y1="0" x2="349" y2="0"><stop offset="0" stop-color="#6a36d8"/><stop offset="0.42" stop-color="#6b3fd8"/><stop offset="0.6" stop-color="#5b78d8"/><stop offset="0.8" stop-color="#45b0d8"/><stop offset="1" stop-color="#3cc8dc"/></linearGradient></defs><rect x="127.1" y="111" width="220.9" height="25.8" rx="6.2" fill="none" stroke="url(#hg)" stroke-width="2.8"/></svg><div class="t" style="left:156px;top:114.2px;">Chart Window</div><div class="t" style="left:156px;top:138.6px;">Tick Chart</div><div class="t" style="left:156px;top:163px;">Depth Of Market</div><div class="t" style="right:1267.5px;top:163px;">Alt+B</div><div class="t" style="left:156px;top:187.5px;color:#a3a3a3;">Options Board</div><div class="t" style="left:156px;top:211.8px;">Specification</div><div class="t" style="left:156px;top:236.3px;letter-spacing:-0.3px;">Popup Prices</div><div class="t" style="right:1267.5px;top:236.3px;">F10</div><div class="t" style="left:156px;top:270.8px;color:#a3a3a3;">Hide</div><div class="t" style="right:1267.5px;top:270.8px;color:#a3a3a3;">Delete</div><div class="t" style="left:156px;top:295.2px;">Hide All</div><div class="t" style="left:156px;top:319.6px;">Show All</div><div class="t" style="left:156px;top:344px;">Symbols</div><div class="t" style="right:1267.5px;top:344px;">Ctrl+U</div><div class="t" style="left:156px;top:368.6px;">Sets</div><svg style="left:325px;top:372.1px" width="6" height="9"><path d="M0.6,0.6L5,4.4L0.6,8.2z" fill="#111"/></svg><div class="t" style="left:156px;top:393px;">Sort</div><svg style="left:325px;top:396.5px" width="6" height="9"><path d="M0.6,0.6L5,4.4L0.6,8.2z" fill="#111"/></svg><div class="t" style="left:156px;top:417.6px;">Export</div><div class="t" style="left:156px;top:452px;">Show Milliseconds</div><div class="t" style="left:156px;top:476.6px;">Auto Remove Expired</div><div class="t" style="left:156px;top:501px;">Auto Arrange</div><div class="t" style="left:156px;top:525.6px;">Grid</div><div class="t" style="left:156px;top:560px;">Columns</div><svg style="left:325px;top:563.5px" width="6" height="9"><path d="M0.6,0.6L5,4.4L0.6,8.2z" fill="#111"/></svg><div class="hl" style="left:127px;top:261px;width:209px;background:#c6c6c6;"></div><div class="hl" style="left:127px;top:262px;width:209px;background:#fafafa;"></div><div class="hl" style="left:127px;top:443px;width:209px;background:#c6c6c6;"></div><div class="hl" style="left:127px;top:444px;width:209px;background:#fafafa;"></div><div class="hl" style="left:127px;top:550.5px;width:209px;background:#c6c6c6;"></div><div class="hl" style="left:127px;top:551.5px;width:209px;background:#fafafa;"></div><svg style="left:131.5px;top:478.5px" width="10" height="10"><path d="M1.2,5.2L3.8,7.8L8.4,2.2" stroke="#111" stroke-width="2.3" fill="none"/></svg><svg style="left:131.5px;top:503.1px" width="10" height="10"><path d="M1.2,5.2L3.8,7.8L8.4,2.2" stroke="#111" stroke-width="2.3" fill="none"/></svg><svg style="left:131.5px;top:527.5px" width="10" height="10"><path d="M1.2,5.2L3.8,7.8L8.4,2.2" stroke="#111" stroke-width="2.3" fill="none"/></svg><svg style="left:0;top:0" width="1600" height="700" fill="none" stroke-linecap="round" stroke-linejoin="round"><path d="M133,115.6V128.4H148" stroke="#c2c2c2" stroke-width="1.3"/><path d="M135.6,120.8L138.4,118.4L142,122L145,119.2L147.6,119.4" stroke="#1d6fa8" stroke-width="1.5"/><path d="M133.2,147.6H136.8L138.8,144.6L141,150.6L143.4,142.6L145.4,147.2H148.2" stroke="#1d6fa8" stroke-width="1.4"/><rect x="132.6" y="164.4" width="15.8" height="13" rx="1.6" fill="#fff" stroke="none"/><path d="M140.5,164.4H134.2Q132.6,164.4 132.6,166V175.8Q132.6,177.4 134.2,177.4H140.5z" fill="#fbe2de" stroke="#de4f46" stroke-width="1.2"/><path d="M140.5,164.4H146.8Q148.4,164.4 148.4,166V175.8Q148.4,177.4 146.8,177.4H140.5z" fill="#dcecfa" stroke="#2f86cf" stroke-width="1.2"/><path d="M134.8,168H138.6M134.8,171H138.6M134.8,174H138.6" stroke="#de4f46" stroke-width="1.3" stroke-linecap="butt"/><path d="M142.4,168H146.2M142.4,171H146.2M142.4,174H146.2" stroke="#2f86cf" stroke-width="1.3" stroke-linecap="butt"/><path d="M133.4,188.6L147.6,201.6M147.6,188.6L133.4,201.6M133.4,201.6H138M143,201.6H147.6" stroke="#c4c4c4" stroke-width="1.2"/><rect x="133" y="212.4" width="15.2" height="14.8" rx="2.2" fill="#cfe7f9" stroke="#1d6fa8" stroke-width="1.4"/><path d="M133,216.2H148.2" stroke="#1d6fa8" stroke-width="1.3"/><path d="M136.2,220H137M139,220H145M136.2,223.4H137M139,223.4H145" stroke="#1d6fa8" stroke-width="1.3"/><rect x="133" y="237" width="15.2" height="14.8" rx="2.2" fill="#cfe7f9" stroke="#1d6fa8" stroke-width="1.4"/><path d="M138,240.4L140.4,243H135.6z" fill="#8fdc9f" stroke="#2fb64c" stroke-width="1"/><path d="M143.8,248.6L141.2,246Q141.2,244.6 142.6,244.6Q143.4,244.6 143.8,245.4Q144.2,244.6 145,244.6Q146.4,244.6 146.4,246z" fill="#f6b0aa" stroke="#de4f46" stroke-width="1"/><rect x="132.8" y="344" width="15.4" height="15.4" rx="2.2" fill="#f8c81c" stroke="#dba514" stroke-width="1"/><path d="M146,352.0" /><path d="M140.6,420.2A6.6,6.6 0 1 0 146.6,426.2" stroke="#2fb64c" stroke-width="1.4"/><path d="M139.8,427L146.8,420M142.2,419.6H147.2V424.6" stroke="#2fb64c" stroke-width="1.4"/></svg><div class="t" style="left:134px;top:344.2px;color:#d18b12;font-weight:bold;font-size:13.5px;width:13px;text-align:center;">$</div>
<div class="a" style="left:0px;top:0px;width:2.4px;height:700px;background:#fff;"></div></body></html>
